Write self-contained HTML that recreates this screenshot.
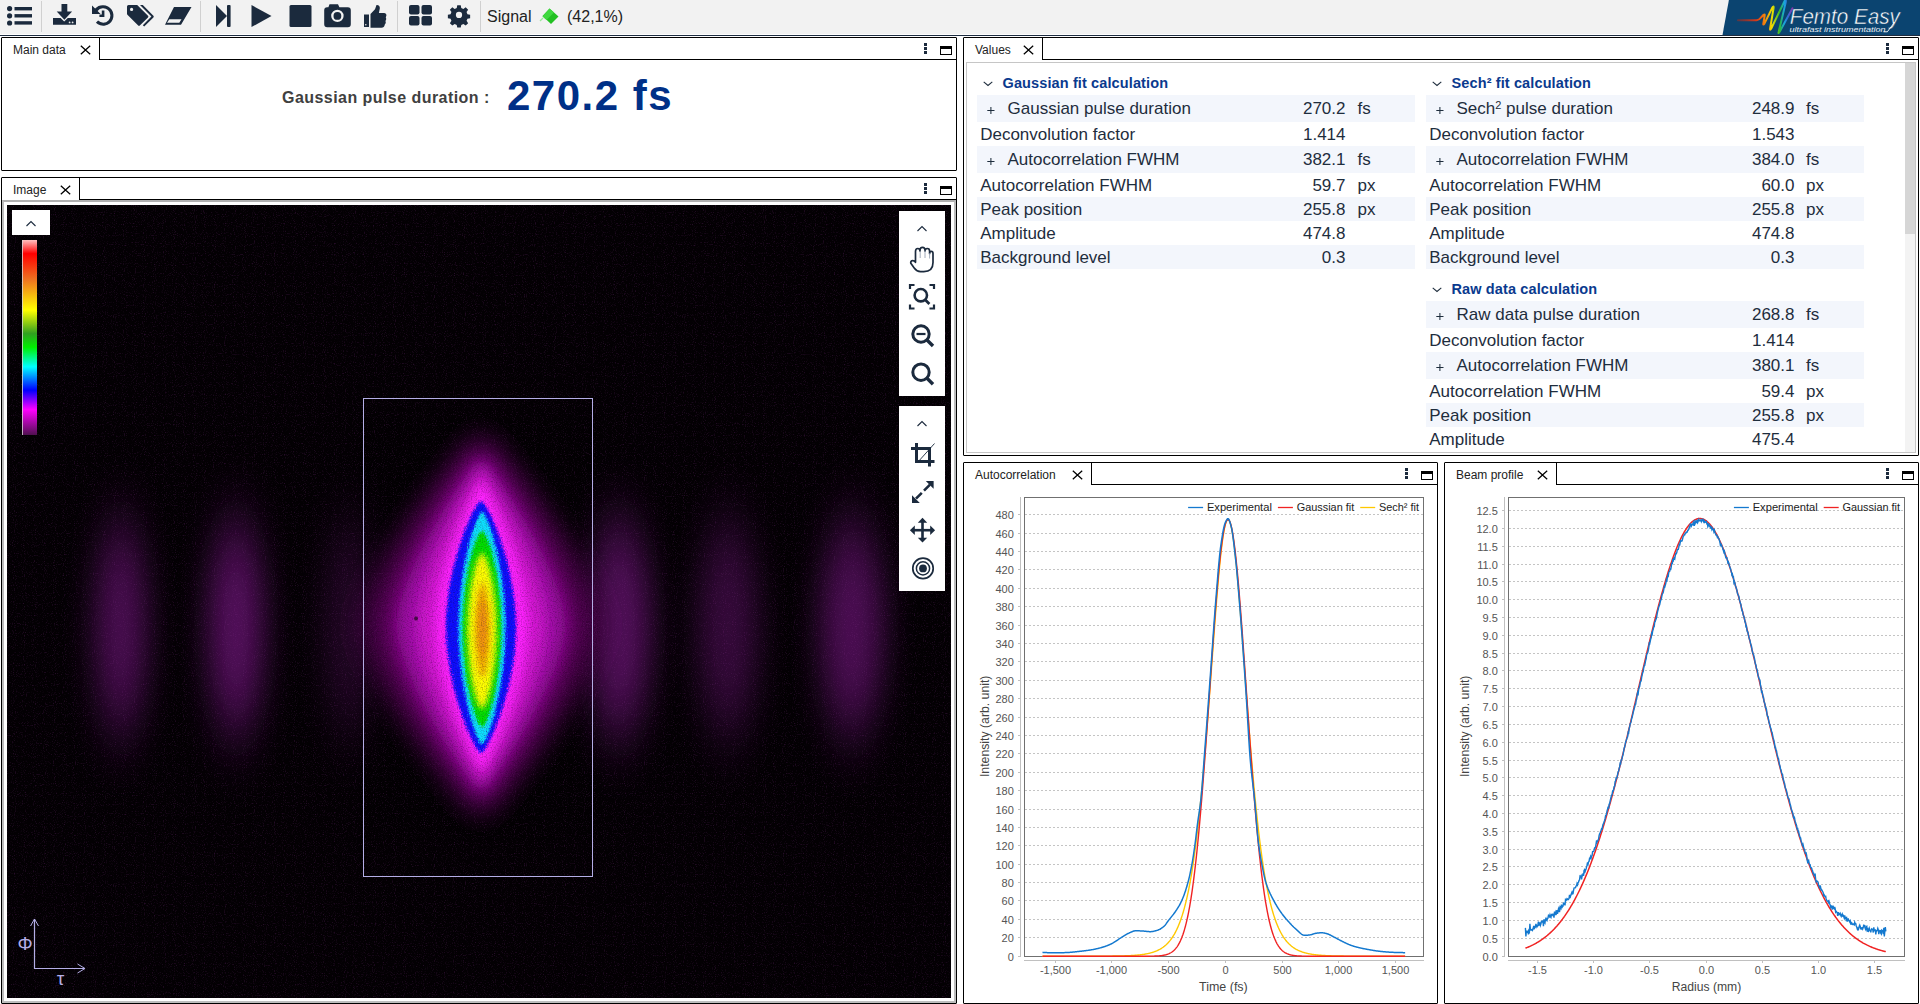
<!DOCTYPE html>
<html><head><meta charset="utf-8"><title>Femto Easy</title>
<style>
html,body{margin:0;padding:0;width:1920px;height:1004px;overflow:hidden;background:#fff;
 font-family:"Liberation Sans",sans-serif;}
.a{position:absolute;}
.pnl{position:absolute;box-sizing:border-box;border:1px solid #000;border-radius:1px;background:#fff;}
.tab{position:absolute;font-size:12px;color:#222;white-space:nowrap;line-height:14px;}
.t{position:absolute;white-space:nowrap;}
svg{position:absolute;overflow:visible;}
</style></head>
<body>
<div class="a" style="left:0;top:0;width:1920px;height:34px;background:#f2f2f2"></div>
<div class="a" style="left:0;top:34px;width:1920px;height:1px;background:#fff"></div>
<div class="a" style="left:0;top:35px;width:1920px;height:1px;background:#1d2c40"></div>
<div class="a" style="left:41px;top:1px;width:1px;height:31px;background:#d0d0d0"></div>
<div class="a" style="left:200px;top:1px;width:1px;height:31px;background:#d0d0d0"></div>
<div class="a" style="left:397px;top:1px;width:1px;height:31px;background:#d0d0d0"></div>
<div class="a" style="left:480px;top:1px;width:1px;height:31px;background:#d0d0d0"></div>

<svg style="left:0;top:0" width="640" height="34" viewBox="0 0 640 34">
 <g fill="#1b2a3d">
  <!-- list -->
  <circle cx="9.6" cy="8.6" r="2.6"/><circle cx="9.6" cy="15.8" r="2.6"/><circle cx="9.6" cy="23" r="2.6"/>
  <rect x="14.5" y="7" width="17.5" height="3.4"/><rect x="14.5" y="14.1" width="17.5" height="3.4"/><rect x="14.5" y="21.2" width="17.5" height="3.4"/>
  <!-- download -->
  <path d="M61.5 4h5.8v7.5h4.8l-7.7 8.3-7.7-8.3h4.8z"/>
  <path d="M53 18h7.6l3.6 3.6 3.6-3.6H76v6.7H53z"/>
  <circle cx="69.6" cy="22.4" r="0.9" fill="#e8e8e8"/><circle cx="72.6" cy="22.4" r="0.9" fill="#e8e8e8"/>
  <!-- history -->
  <path d="M103.2 5.2a10.3 10.3 0 1 1-7.3 17.6l2.2-2.2a7.2 7.2 0 1 0-0.5-9.6l3 3H92V5.5l3.1 3.1a10.3 10.3 0 0 1 8.1-3.4z"/>
  <path d="M101.8 10.5h2.6v6.4h-5v-2.4h2.4z"/>
  <!-- tags -->
  <path d="M128.5 5H137.2L148 15.8Q148.8 16.6 148 17.4L139.8 25.6Q139 26.4 138.2 25.6L127.4 14.8Q127 14.4 127 13.8V6.5Q127 5 128.5 5ZM131.6 7.8a1.6 1.6 0 1 0 0 3.2 1.6 1.6 0 0 0 0-3.2z" fill-rule="evenodd"/>
  <path d="M140 5H142.8L153.4 15.8Q154.2 16.6 153.4 17.4L144.2 26.6L142.8 25.2L151.4 16.6Z"/>
  <!-- eraser -->
  <path d="M174 7h17.5l-10.5 17.8H165zM169.3 19.2l-2.3 3.6h12.3l2.2-3.6z" fill-rule="evenodd"/>
  <!-- step forward -->
  <path d="M216 5v22l11-11z"/><rect x="227" y="5" width="3.6" height="22" rx="1"/>
  <!-- play -->
  <path d="M251.5 5v22l20-11z"/>
  <!-- stop -->
  <rect x="289.5" y="5" width="22" height="22" rx="1.5"/>
  <!-- camera -->
  <path d="M329.5 4.2h8.5l1.4 3h8.4a3 3 0 0 1 3 3v14a3 3 0 0 1-3 3h-20.6a3 3 0 0 1-3-3v-14a3 3 0 0 1 3-3h1.2zM337.4 9.7a6.2 6.2 0 1 0 0 12.4 6.2 6.2 0 0 0 0-12.4zM337.4 12a3.9 3.9 0 1 1 0 7.8 3.9 3.9 0 0 1 0-7.8z" fill-rule="evenodd"/>
  <!-- thumbs up -->
  <path d="M364 14.5h5v12.5h-5z"/><circle cx="365.8" cy="24.8" r="0.8" fill="#e8e8e8"/>
  <path d="M370.5 14l4.5-4.8 1.5-4.3c2.2-.2 3.6 1.2 3.3 3.6l-.9 4.4h5.2c1.4 0 2.5 1.2 2.3 2.6l-.6 2 .5 1.5-.8 2 .3 2-1 1.6c-.3 2.2-1.6 3.2-3.2 3.2H370.5z"/>
  <!-- grid -->
  <rect x="409" y="5" width="10.5" height="9.5" rx="2"/><rect x="421.5" y="5" width="10.5" height="9.5" rx="2"/>
  <rect x="409" y="16" width="10.5" height="9.5" rx="2"/><rect x="421.5" y="16" width="10.5" height="9.5" rx="2"/>
 </g>
 <!-- gear -->
 <g transform="translate(459 14.9) scale(0.87)" fill="#1b2a3d">
  <path id="gear" d="M-2 -11h4l.6 3.1 2.4 1 2.7-1.8 2.8 2.8-1.8 2.7 1 2.4 3.1.6v4l-3.1.6-1 2.4 1.8 2.7-2.8 2.8-2.7-1.8-2.4 1-.6 3.1h-4l-.6-3.1-2.4-1-2.7 1.8-2.8-2.8 1.8-2.7-1-2.4-3.1-.6v-4l3.1-.6 1-2.4-1.8-2.7 2.8-2.8 2.7 1.8 2.4-1zM0 -3.6a3.6 3.6 0 1 0 0 7.2 3.6 3.6 0 0 0 0-7.2z" fill-rule="evenodd"/>
 </g>
 <!-- green flag -->
 <path d="M540 21l3-3" stroke="#9be89b" stroke-width="1.2"/>
 <path d="M549.5 8.5l9 8-7.5 7.5-8.5-8z" fill="#22c022"/>
 <path d="M549.5 8.5l4.5 4-7.5 7.5-4-3.5z" fill="#3ed83e"/>
</svg>
<div class="t" style="left:487px;top:8px;font-size:16px;line-height:18px;color:#222;">Signal</div>
<div class="t" style="left:567px;top:8px;font-size:16px;line-height:18px;color:#222;">(42,1%)</div>

<svg style="left:1720px;top:0" width="200" height="35" viewBox="0 0 200 35">
 <defs>
  <linearGradient id="wave" gradientUnits="userSpaceOnUse" x1="18" y1="0" x2="73" y2="0">
   <stop offset="0" stop-color="#b02818" stop-opacity="0.5"/>
   <stop offset="0.34" stop-color="#d83a18"/>
   <stop offset="0.45" stop-color="#f07010"/>
   <stop offset="0.62" stop-color="#f0e000"/>
   <stop offset="0.76" stop-color="#30b830"/>
   <stop offset="0.84" stop-color="#18a8e0"/>
   <stop offset="0.9" stop-color="#3070d8"/>
   <stop offset="1" stop-color="#9030a8"/>
  </linearGradient>
 </defs>
 <path d="M8.9 0H200V35H2.5z" fill="#0b4470"/>
 <path d="M18 20.3H36.5Q39 20.2 41 17.5L43.6 14.8Q45 13.8 44.6 15.8L43.3 23.6Q43 25.6 44.4 23.6L52.3 7.6Q54 5 53.6 8L50.2 28Q49.6 31.2 51.4 28.2L64.6 1Q66.2 -1.5 65.8 2L58.8 31.5Q58 34.5 59.8 31.5L72.5 8.3" fill="none" stroke="url(#wave)" stroke-width="2" stroke-linejoin="round" stroke-linecap="round"/>
 <text x="69.8" y="24.4" font-family="Liberation Sans" font-style="italic" font-size="21.3" fill="#fff" stroke="#0b4470" stroke-width="0.45" textLength="110" lengthAdjust="spacingAndGlyphs">Femto Easy</text>
 <text x="69.5" y="31.6" font-family="Liberation Sans" font-style="italic" font-size="8" fill="#e8eef4" textLength="96" lengthAdjust="spacingAndGlyphs">ultrafast instrumentation</text>
 <path d="M163.5 31.8h3.8l6.5-8.5" fill="none" stroke="#fff" stroke-width="0.9"/>
</svg>
<div class="pnl" style="left:1px;top:37px;width:956px;height:134px"></div>
<div class="a" style="left:99px;top:59px;width:857px;height:1px;background:#000"></div>
<div class="a" style="left:99px;top:37px;width:1px;height:23px;background:#000"></div>
<div class="tab" style="left:13px;top:43px">Main data</div>
<svg style="left:80px;top:45px" width="11" height="10" viewBox="0 0 11 10"><path d="M0.8 0.8l9.4 8.4M10.2 0.8l-9.4 8.4" stroke="#000" stroke-width="1.25"/></svg>
<div class="a" style="left:924px;top:43px;width:3px;height:3px;background:#1b2a3d"></div>
<div class="a" style="left:924px;top:47px;width:3px;height:3px;background:#1b2a3d"></div>
<div class="a" style="left:924px;top:51px;width:3px;height:3px;background:#1b2a3d"></div>
<div class="a" style="left:940px;top:46px;width:12px;height:9px;box-sizing:border-box;border:1.2px solid #000;border-top-width:3px"></div>
<div class="pnl" style="left:1px;top:177px;width:956px;height:827px"></div>
<div class="a" style="left:79px;top:199px;width:877px;height:1px;background:#000"></div>
<div class="a" style="left:79px;top:177px;width:1px;height:23px;background:#000"></div>
<div class="tab" style="left:13px;top:183px">Image</div>
<svg style="left:60px;top:185px" width="11" height="10" viewBox="0 0 11 10"><path d="M0.8 0.8l9.4 8.4M10.2 0.8l-9.4 8.4" stroke="#000" stroke-width="1.25"/></svg>
<div class="a" style="left:924px;top:183px;width:3px;height:3px;background:#1b2a3d"></div>
<div class="a" style="left:924px;top:187px;width:3px;height:3px;background:#1b2a3d"></div>
<div class="a" style="left:924px;top:191px;width:3px;height:3px;background:#1b2a3d"></div>
<div class="a" style="left:940px;top:186px;width:12px;height:9px;box-sizing:border-box;border:1.2px solid #000;border-top-width:3px"></div>
<div class="pnl" style="left:963px;top:37px;width:956px;height:419px"></div>
<div class="a" style="left:1042px;top:59px;width:876px;height:1px;background:#000"></div>
<div class="a" style="left:1042px;top:37px;width:1px;height:23px;background:#000"></div>
<div class="tab" style="left:975px;top:43px">Values</div>
<svg style="left:1023px;top:45px" width="11" height="10" viewBox="0 0 11 10"><path d="M0.8 0.8l9.4 8.4M10.2 0.8l-9.4 8.4" stroke="#000" stroke-width="1.25"/></svg>
<div class="a" style="left:1886px;top:43px;width:3px;height:3px;background:#1b2a3d"></div>
<div class="a" style="left:1886px;top:47px;width:3px;height:3px;background:#1b2a3d"></div>
<div class="a" style="left:1886px;top:51px;width:3px;height:3px;background:#1b2a3d"></div>
<div class="a" style="left:1902px;top:46px;width:12px;height:9px;box-sizing:border-box;border:1.2px solid #000;border-top-width:3px"></div>
<div class="pnl" style="left:963px;top:462px;width:475px;height:542px"></div>
<div class="a" style="left:1091px;top:484px;width:346px;height:1px;background:#000"></div>
<div class="a" style="left:1091px;top:462px;width:1px;height:23px;background:#000"></div>
<div class="tab" style="left:975px;top:468px">Autocorrelation</div>
<svg style="left:1072px;top:470px" width="11" height="10" viewBox="0 0 11 10"><path d="M0.8 0.8l9.4 8.4M10.2 0.8l-9.4 8.4" stroke="#000" stroke-width="1.25"/></svg>
<div class="a" style="left:1405px;top:468px;width:3px;height:3px;background:#1b2a3d"></div>
<div class="a" style="left:1405px;top:472px;width:3px;height:3px;background:#1b2a3d"></div>
<div class="a" style="left:1405px;top:476px;width:3px;height:3px;background:#1b2a3d"></div>
<div class="a" style="left:1421px;top:471px;width:12px;height:9px;box-sizing:border-box;border:1.2px solid #000;border-top-width:3px"></div>
<div class="pnl" style="left:1444px;top:462px;width:475px;height:542px"></div>
<div class="a" style="left:1556px;top:484px;width:362px;height:1px;background:#000"></div>
<div class="a" style="left:1556px;top:462px;width:1px;height:23px;background:#000"></div>
<div class="tab" style="left:1456px;top:468px">Beam profile</div>
<svg style="left:1537px;top:470px" width="11" height="10" viewBox="0 0 11 10"><path d="M0.8 0.8l9.4 8.4M10.2 0.8l-9.4 8.4" stroke="#000" stroke-width="1.25"/></svg>
<div class="a" style="left:1886px;top:468px;width:3px;height:3px;background:#1b2a3d"></div>
<div class="a" style="left:1886px;top:472px;width:3px;height:3px;background:#1b2a3d"></div>
<div class="a" style="left:1886px;top:476px;width:3px;height:3px;background:#1b2a3d"></div>
<div class="a" style="left:1902px;top:471px;width:12px;height:9px;box-sizing:border-box;border:1.2px solid #000;border-top-width:3px"></div>
<div class="t" style="left:282px;top:89px;font-size:16px;line-height:18px;font-weight:bold;color:#404040;letter-spacing:0.45px">Gaussian pulse duration :</div>
<div class="t" style="left:507px;top:73px;font-size:42px;line-height:46px;font-weight:bold;color:#003087;letter-spacing:1.5px">270.2 fs</div>
<div class="a" style="left:2px;top:200px;width:954px;height:803px;box-sizing:border-box;border:2px solid #bdbdbd;border-top-color:#b0b0b0"></div>
<svg style="left:7px;top:205px" width="944" height="793" viewBox="7 205 944 793">
<defs>
 <filter id="b1" x="-50%" y="-50%" width="200%" height="200%"><feGaussianBlur stdDeviation="1.2"/></filter>
 <filter id="b2" x="-50%" y="-50%" width="200%" height="200%"><feGaussianBlur stdDeviation="2.5"/></filter>
 <filter id="b4" x="-50%" y="-50%" width="200%" height="200%"><feGaussianBlur stdDeviation="4"/></filter>
 <filter id="b7" x="-50%" y="-50%" width="200%" height="200%"><feGaussianBlur stdDeviation="6"/></filter>
 <filter id="b8" x="-50%" y="-50%" width="200%" height="200%"><feGaussianBlur stdDeviation="8"/></filter>
 <filter id="b12" x="-50%" y="-50%" width="200%" height="200%"><feGaussianBlur stdDeviation="14"/></filter>
 <filter id="b20" x="-80%" y="-50%" width="260%" height="200%"><feGaussianBlur stdDeviation="20"/></filter>
 <filter id="b30" x="-80%" y="-80%" width="260%" height="260%"><feGaussianBlur stdDeviation="16 34"/></filter>
 <filter id="speck" x="-20%" y="-20%" width="140%" height="140%">
   <feTurbulence type="fractalNoise" baseFrequency="0.7" numOctaves="2" seed="11" result="t"/>
   <feDisplacementMap in="SourceGraphic" in2="t" scale="6" xChannelSelector="R" yChannelSelector="G"/>
 </filter>
 <filter id="dnoise" x="0" y="0" width="100%" height="100%">
   <feTurbulence type="fractalNoise" baseFrequency="0.8" numOctaves="1" seed="21"/>
   <feColorMatrix type="matrix" values="0 0 0 0 0  0 0 0 0 0  0 0 0 0 0  0 0 0 1.6 -0.75"/>
 </filter>
 <filter id="noise" x="0" y="0" width="100%" height="100%">
   <feTurbulence type="fractalNoise" baseFrequency="0.9" numOctaves="1" seed="4" result="n"/>
   <feColorMatrix type="matrix" values="0 0 0 0 0.22  0 0 0 0 0.03  0 0 0 0 0.25  0 0 0 1.0 -0.55"/>
 </filter>
 <linearGradient id="cbar" x1="0" y1="0" x2="0" y2="1">
  <stop offset="0" stop-color="#ffc0c0"/>
  <stop offset="0.07" stop-color="#ff0000"/>
  <stop offset="0.2" stop-color="#ee7020"/>
  <stop offset="0.36" stop-color="#ffff00"/>
  <stop offset="0.48" stop-color="#30a020"/>
  <stop offset="0.55" stop-color="#00ee00"/>
  <stop offset="0.65" stop-color="#00ffff"/>
  <stop offset="0.77" stop-color="#0000ff"/>
  <stop offset="0.87" stop-color="#ff00ff"/>
  <stop offset="1" stop-color="#501050"/>
 </linearGradient>
</defs>
<rect x="7" y="205" width="944" height="793" fill="#030003"/>
<ellipse cx="121" cy="628" rx="26" ry="108" fill="#a01cb0" opacity="0.46" filter="url(#b30)"/>
<ellipse cx="236" cy="628" rx="28" ry="108" fill="#a01cb0" opacity="0.52" filter="url(#b30)"/>
<ellipse cx="350" cy="628" rx="26" ry="108" fill="#a01cb0" opacity="0.2" filter="url(#b30)"/>
<ellipse cx="619" cy="628" rx="32" ry="108" fill="#a01cb0" opacity="0.5" filter="url(#b30)"/>
<ellipse cx="728" cy="628" rx="30" ry="108" fill="#a01cb0" opacity="0.32" filter="url(#b30)"/>
<ellipse cx="852" cy="628" rx="32" ry="108" fill="#a01cb0" opacity="0.46" filter="url(#b30)"/>
<path d="M481 433C487.0 433 601 567.4 601 625C601 682.6 487.0 817 481 817C475.0 817 361 682.6 361 625C361 567.4 475.0 433 481 433Z" fill="#380038" filter="url(#b12)"/>
<path d="M481 443C486.0 443 581 570.4 581 625C581 679.6 486.0 807 481 807C476.0 807 381 679.6 381 625C381 570.4 476.0 443 481 443Z" fill="#680068" filter="url(#b12)"/>
<path d="M481 457C485.2 457 565 571.24 565 625C565 678.76 485.2 793 481 793C476.8 793 397 678.76 397 625C397 571.24 476.8 457 481 457Z" fill="#a010a8" filter="url(#b8)"/>
<path d="M481.5 469C485.34 469 545.5 570.4 545.5 625C545.5 679.6 485.34 781 481.5 781C477.66 781 417.5 679.6 417.5 625C417.5 570.4 477.66 469 481.5 469Z" fill="#d018d0" filter="url(#b7)"/>
<path d="M481.5 483C486.2 483 528.5 565.94 528.5 626C528.5 686.06 486.2 769 481.5 769C476.8 769 434.5 686.06 434.5 626C434.5 565.94 476.8 483 481.5 483Z" fill="#ff22ff" filter="url(#b4)"/>
<g filter="url(#speck)">
<path d="M481 501C486.6 501 516 564.0 516 627C516 690.0 486.6 753 481 753C475.4 753 446 690.0 446 627C446 564.0 475.4 501 481 501Z" fill="#0808ff" filter="url(#b1)"/>
<path d="M482 512C486.7 512 505.5 564.2 505.5 628C505.5 691.8 486.7 744 482 744C477.3 744 458.5 691.8 458.5 628C458.5 564.2 477.3 512 482 512Z" fill="#10e0ff" filter="url(#b1)"/>
<path d="M482 531C486.68 531 501.5 572.16 501.5 629C501.5 685.84 486.68 727 482 727C477.32 727 462.5 685.84 462.5 629C462.5 572.16 477.32 531 482 531Z" fill="#00e000" filter="url(#b1)"/>
<path d="M482 553C486.06 553 496.5 584.2 496.5 631C496.5 677.8 486.06 709 482 709C477.94 709 467.5 677.8 467.5 631C467.5 584.2 477.94 553 482 553Z" fill="#ffff00" filter="url(#b2)"/>
<path d="M482.5 582C484.74 582 489.5 601.2 489.5 630C489.5 658.8 484.74 678 482.5 678C480.26 678 475.5 658.8 475.5 630C475.5 601.2 480.26 582 482.5 582Z" fill="#f0a000" opacity="0.9" filter="url(#b2)"/>
<path d="M482.5 598C483.94 598 487.0 610.0 487.0 628C487.0 646.0 483.94 658 482.5 658C481.06 658 478.0 646.0 478.0 628C478.0 610.0 481.06 598 482.5 598Z" fill="#f08010" opacity="0.6" filter="url(#b2)"/>
</g>
<rect x="360" y="420" width="240" height="420" filter="url(#dnoise)" opacity="0.5"/>
<circle cx="416" cy="618.5" r="2" fill="#2a0a2a" opacity="0.8"/>
<rect x="7" y="205" width="944" height="793" filter="url(#noise)"/>
<rect x="363.5" y="398.5" width="229" height="478" fill="none" stroke="#b4aee6" stroke-width="1"/>
<rect x="12" y="210" width="38" height="25" fill="#fff"/>
<path d="M26.5 226l4.5-4.5 4.5 4.5" fill="none" stroke="#1b2a3d" stroke-width="1.1"/>
<rect x="22" y="240" width="15" height="195" fill="url(#cbar)"/>
<rect x="22" y="240" width="1" height="195" fill="#d8d8d8" opacity="0.8"/>
<path d="M34.5 919V968.5H85" fill="none" stroke="#b4aee6" stroke-width="1.2"/>
<path d="M30.5 926l4-7 4 7M77.5 964l7.5 4.5-7.5 4.5" fill="none" stroke="#b4aee6" stroke-width="1"/>
<text x="25" y="950" font-family="Liberation Sans" font-size="19" fill="#b4aee6" text-anchor="middle">&#934;</text>
<text x="60.5" y="985" font-family="Liberation Sans" font-size="19" fill="#b4aee6" text-anchor="middle">&#964;</text>
<rect x="899" y="211" width="46" height="185" fill="#fff"/>
<rect x="899" y="406" width="46" height="185" fill="#fff"/>
<g fill="none" stroke="#1b2a3d" stroke-width="1.1">
  <path d="M917.5 231l4.5-4.5 4.5 4.5"/>
  <path d="M917.5 426l4.5-4.5 4.5 4.5"/>
 </g>
 <!-- hand -->
 <path d="M915.5 261V251.5Q915.5 248.5 917.8 248.5Q920 248.5 920 251V250Q920 247.3 922.5 247.3Q925 247.3 925 250V251Q925 248.5 927.3 248.5Q929.6 248.5 929.6 251V253.5Q929.6 251.3 931.3 251.3Q933 251.3 933 253.5V262.5Q933 271.6 923.8 271.6H920.5Q916.8 271.6 914.2 268L911 263.6Q910.2 261.8 911.8 260.8Q913.6 259.9 915.5 262.3Z" fill="#fff" stroke="#1b2a3d" stroke-width="1.7" stroke-linejoin="round"/>
 <path d="M920.2 251.5V258M925 250.5V258M929.6 253V258.5" stroke="#8a96a8" stroke-width="0.8"/>
 <!-- zoom fit -->
 <g fill="none" stroke="#1b2a3d" stroke-width="2.2">
  <path d="M910 289v-4h4.5M929.5 285h4.5v4M934 304.5v4h-4.5M914.5 308.5H910v-4"/>
  <circle cx="920.8" cy="295.2" r="6.2" stroke-width="2.6"/>
  <path d="M925.2 299.8l4.2 4.2" stroke-width="2.8"/>
 </g>
 <!-- zoom out -->
 <g fill="none" stroke="#1b2a3d">
  <circle cx="921" cy="334" r="8.2" stroke-width="3"/>
  <path d="M927 340l6 6" stroke-width="3.4"/>
  <path d="M916.5 334h9" stroke-width="2.2"/>
 </g>
 <!-- zoom -->
 <g fill="none" stroke="#1b2a3d">
  <circle cx="921" cy="372.2" r="8.2" stroke-width="3"/>
  <path d="M927 378.2l6 6" stroke-width="3.4"/>
 </g>
 <!-- crop -->
 <g fill="#1b2a3d">
  <rect x="911" y="447" width="20" height="3"/>
  <rect x="915" y="443" width="3" height="20"/>
  <rect x="928" y="447" width="3" height="19.5"/>
  <rect x="915" y="460" width="19.5" height="3"/>
 </g>
 <path d="M917.5 462.5L934.5 443.5" stroke="#1b2a3d" stroke-width="0.9"/>
 <!-- resize diag -->
 <g fill="#1b2a3d">
  <path d="M925.8 481H933.6V488.8Z"/>
  <path d="M912 495.2V503H919.8Z"/>
 </g>
 <path d="M930 484.6L924 490.6M916 498.6L921.8 492.8" stroke="#1b2a3d" stroke-width="2.6"/>
 <!-- move -->
 <g fill="#1b2a3d">
  <path d="M922.5 517.8l4.7 4.9h-9.4z"/>
  <path d="M922.5 542.6l4.7-4.9h-9.4z"/>
  <path d="M909.9 530.2l4.9-4.7v9.4z"/>
  <path d="M935.1 530.2l-4.9-4.7v9.4z"/>
  <rect x="921.2" y="522" width="2.6" height="16"/>
  <rect x="914" y="528.9" width="17" height="2.6"/>
 </g>
 <!-- target -->
 <g fill="none" stroke="#1b2a3d">
  <circle cx="923" cy="568.4" r="10.2" stroke-width="1.7"/>
  <circle cx="923" cy="568.4" r="6.6" stroke-width="1.5"/>
 </g>
 <circle cx="923" cy="568.4" r="3.9" fill="#1b2a3d"/>
</svg>
<div class="a" style="left:966px;top:62px;width:950px;height:391px;box-sizing:border-box;border:1px solid #c6c6c6"></div>
<div class="a" style="left:1905px;top:63px;width:10px;height:389px;background:#f3f3f3"></div>
<div class="a" style="left:1905px;top:63px;width:10px;height:171px;background:#d6d6d6"></div>
<svg style="left:983px;top:81px" width="10" height="6" viewBox="0 0 10 6"><path d="M0.7 0.9l4.3 3.6 4.3-3.6" fill="none" stroke="#1e2d3d" stroke-width="1.1"/></svg>
<div class="t" style="left:1002.5px;top:75.73px;font-size:14.5px;line-height:14.5px;color:#0a3a8e;font-weight:bold;letter-spacing:0.12px;">Gaussian fit calculation</div>
<div class="a" style="left:977px;top:95px;width:438px;height:27px;background:#f3f6fc"></div>
<svg style="left:986.5px;top:106px" width="8" height="8" viewBox="0 0 8 8"><path d="M0.3 4.5h7.2M3.9 0.9v7.2" stroke="#1e2d3d" stroke-width="1.05"/></svg>
<div class="t" style="left:1007.5px;top:99.61px;font-size:17px;line-height:17px;color:#1e2d3d;">Gaussian pulse duration</div>
<div class="t" style="right:574.5px;top:99.61px;font-size:17px;line-height:17px;color:#1e2d3d;text-align:right">270.2</div>
<div class="t" style="left:1357.5px;top:99.61px;font-size:17px;line-height:17px;color:#1e2d3d;">fs</div>
<div class="t" style="left:980.2px;top:125.61px;font-size:17px;line-height:17px;color:#1e2d3d;">Deconvolution factor</div>
<div class="t" style="right:574.5px;top:125.61px;font-size:17px;line-height:17px;color:#1e2d3d;text-align:right">1.414</div>
<div class="a" style="left:977px;top:146px;width:438px;height:27px;background:#f3f6fc"></div>
<svg style="left:986.5px;top:157px" width="8" height="8" viewBox="0 0 8 8"><path d="M0.3 4.5h7.2M3.9 0.9v7.2" stroke="#1e2d3d" stroke-width="1.05"/></svg>
<div class="t" style="left:1007.5px;top:150.61px;font-size:17px;line-height:17px;color:#1e2d3d;">Autocorrelation FWHM</div>
<div class="t" style="right:574.5px;top:150.61px;font-size:17px;line-height:17px;color:#1e2d3d;text-align:right">382.1</div>
<div class="t" style="left:1357.5px;top:150.61px;font-size:17px;line-height:17px;color:#1e2d3d;">fs</div>
<div class="t" style="left:980.2px;top:176.61px;font-size:17px;line-height:17px;color:#1e2d3d;">Autocorrelation FWHM</div>
<div class="t" style="right:574.5px;top:176.61px;font-size:17px;line-height:17px;color:#1e2d3d;text-align:right">59.7</div>
<div class="t" style="left:1357.5px;top:176.61px;font-size:17px;line-height:17px;color:#1e2d3d;">px</div>
<div class="a" style="left:977px;top:197px;width:438px;height:24px;background:#f3f6fc"></div>
<div class="t" style="left:980.2px;top:200.61px;font-size:17px;line-height:17px;color:#1e2d3d;">Peak position</div>
<div class="t" style="right:574.5px;top:200.61px;font-size:17px;line-height:17px;color:#1e2d3d;text-align:right">255.8</div>
<div class="t" style="left:1357.5px;top:200.61px;font-size:17px;line-height:17px;color:#1e2d3d;">px</div>
<div class="t" style="left:980.2px;top:224.61px;font-size:17px;line-height:17px;color:#1e2d3d;">Amplitude</div>
<div class="t" style="right:574.5px;top:224.61px;font-size:17px;line-height:17px;color:#1e2d3d;text-align:right">474.8</div>
<div class="a" style="left:977px;top:245px;width:438px;height:24px;background:#f3f6fc"></div>
<div class="t" style="left:980.2px;top:248.61px;font-size:17px;line-height:17px;color:#1e2d3d;">Background level</div>
<div class="t" style="right:574.5px;top:248.61px;font-size:17px;line-height:17px;color:#1e2d3d;text-align:right">0.3</div>
<svg style="left:1432px;top:81px" width="10" height="6" viewBox="0 0 10 6"><path d="M0.7 0.9l4.3 3.6 4.3-3.6" fill="none" stroke="#1e2d3d" stroke-width="1.1"/></svg>
<div class="t" style="left:1451.5px;top:75.73px;font-size:14.5px;line-height:14.5px;color:#0a3a8e;font-weight:bold;letter-spacing:0.12px;">Sech&sup2; fit calculation</div>
<div class="a" style="left:1426px;top:95px;width:438px;height:27px;background:#f3f6fc"></div>
<svg style="left:1435.5px;top:106px" width="8" height="8" viewBox="0 0 8 8"><path d="M0.3 4.5h7.2M3.9 0.9v7.2" stroke="#1e2d3d" stroke-width="1.05"/></svg>
<div class="t" style="left:1456.5px;top:99.61px;font-size:17px;line-height:17px;color:#1e2d3d;">Sech<span style="font-size:11px;position:relative;top:-5px">2</span> pulse duration</div>
<div class="t" style="right:125.5px;top:99.61px;font-size:17px;line-height:17px;color:#1e2d3d;text-align:right">248.9</div>
<div class="t" style="left:1806px;top:99.61px;font-size:17px;line-height:17px;color:#1e2d3d;">fs</div>
<div class="t" style="left:1429.2px;top:125.61px;font-size:17px;line-height:17px;color:#1e2d3d;">Deconvolution factor</div>
<div class="t" style="right:125.5px;top:125.61px;font-size:17px;line-height:17px;color:#1e2d3d;text-align:right">1.543</div>
<div class="a" style="left:1426px;top:146px;width:438px;height:27px;background:#f3f6fc"></div>
<svg style="left:1435.5px;top:157px" width="8" height="8" viewBox="0 0 8 8"><path d="M0.3 4.5h7.2M3.9 0.9v7.2" stroke="#1e2d3d" stroke-width="1.05"/></svg>
<div class="t" style="left:1456.5px;top:150.61px;font-size:17px;line-height:17px;color:#1e2d3d;">Autocorrelation FWHM</div>
<div class="t" style="right:125.5px;top:150.61px;font-size:17px;line-height:17px;color:#1e2d3d;text-align:right">384.0</div>
<div class="t" style="left:1806px;top:150.61px;font-size:17px;line-height:17px;color:#1e2d3d;">fs</div>
<div class="t" style="left:1429.2px;top:176.61px;font-size:17px;line-height:17px;color:#1e2d3d;">Autocorrelation FWHM</div>
<div class="t" style="right:125.5px;top:176.61px;font-size:17px;line-height:17px;color:#1e2d3d;text-align:right">60.0</div>
<div class="t" style="left:1806px;top:176.61px;font-size:17px;line-height:17px;color:#1e2d3d;">px</div>
<div class="a" style="left:1426px;top:197px;width:438px;height:24px;background:#f3f6fc"></div>
<div class="t" style="left:1429.2px;top:200.61px;font-size:17px;line-height:17px;color:#1e2d3d;">Peak position</div>
<div class="t" style="right:125.5px;top:200.61px;font-size:17px;line-height:17px;color:#1e2d3d;text-align:right">255.8</div>
<div class="t" style="left:1806px;top:200.61px;font-size:17px;line-height:17px;color:#1e2d3d;">px</div>
<div class="t" style="left:1429.2px;top:224.61px;font-size:17px;line-height:17px;color:#1e2d3d;">Amplitude</div>
<div class="t" style="right:125.5px;top:224.61px;font-size:17px;line-height:17px;color:#1e2d3d;text-align:right">474.8</div>
<div class="a" style="left:1426px;top:245px;width:438px;height:24px;background:#f3f6fc"></div>
<div class="t" style="left:1429.2px;top:248.61px;font-size:17px;line-height:17px;color:#1e2d3d;">Background level</div>
<div class="t" style="right:125.5px;top:248.61px;font-size:17px;line-height:17px;color:#1e2d3d;text-align:right">0.3</div>
<svg style="left:1432px;top:287px" width="10" height="6" viewBox="0 0 10 6"><path d="M0.7 0.9l4.3 3.6 4.3-3.6" fill="none" stroke="#1e2d3d" stroke-width="1.1"/></svg>
<div class="t" style="left:1451.5px;top:281.73px;font-size:14.5px;line-height:14.5px;color:#0a3a8e;font-weight:bold;letter-spacing:0.12px;">Raw data calculation</div>
<div class="a" style="left:1426px;top:301px;width:438px;height:27px;background:#f3f6fc"></div>
<svg style="left:1435.5px;top:312px" width="8" height="8" viewBox="0 0 8 8"><path d="M0.3 4.5h7.2M3.9 0.9v7.2" stroke="#1e2d3d" stroke-width="1.05"/></svg>
<div class="t" style="left:1456.5px;top:305.61px;font-size:17px;line-height:17px;color:#1e2d3d;">Raw data pulse duration</div>
<div class="t" style="right:125.5px;top:305.61px;font-size:17px;line-height:17px;color:#1e2d3d;text-align:right">268.8</div>
<div class="t" style="left:1806px;top:305.61px;font-size:17px;line-height:17px;color:#1e2d3d;">fs</div>
<div class="t" style="left:1429.2px;top:331.61px;font-size:17px;line-height:17px;color:#1e2d3d;">Deconvolution factor</div>
<div class="t" style="right:125.5px;top:331.61px;font-size:17px;line-height:17px;color:#1e2d3d;text-align:right">1.414</div>
<div class="a" style="left:1426px;top:352px;width:438px;height:27px;background:#f3f6fc"></div>
<svg style="left:1435.5px;top:363px" width="8" height="8" viewBox="0 0 8 8"><path d="M0.3 4.5h7.2M3.9 0.9v7.2" stroke="#1e2d3d" stroke-width="1.05"/></svg>
<div class="t" style="left:1456.5px;top:356.61px;font-size:17px;line-height:17px;color:#1e2d3d;">Autocorrelation FWHM</div>
<div class="t" style="right:125.5px;top:356.61px;font-size:17px;line-height:17px;color:#1e2d3d;text-align:right">380.1</div>
<div class="t" style="left:1806px;top:356.61px;font-size:17px;line-height:17px;color:#1e2d3d;">fs</div>
<div class="t" style="left:1429.2px;top:382.61px;font-size:17px;line-height:17px;color:#1e2d3d;">Autocorrelation FWHM</div>
<div class="t" style="right:125.5px;top:382.61px;font-size:17px;line-height:17px;color:#1e2d3d;text-align:right">59.4</div>
<div class="t" style="left:1806px;top:382.61px;font-size:17px;line-height:17px;color:#1e2d3d;">px</div>
<div class="a" style="left:1426px;top:403px;width:438px;height:24px;background:#f3f6fc"></div>
<div class="t" style="left:1429.2px;top:406.61px;font-size:17px;line-height:17px;color:#1e2d3d;">Peak position</div>
<div class="t" style="right:125.5px;top:406.61px;font-size:17px;line-height:17px;color:#1e2d3d;text-align:right">255.8</div>
<div class="t" style="left:1806px;top:406.61px;font-size:17px;line-height:17px;color:#1e2d3d;">px</div>
<div class="t" style="left:1429.2px;top:430.61px;font-size:17px;line-height:17px;color:#1e2d3d;">Amplitude</div>
<div class="t" style="right:125.5px;top:430.61px;font-size:17px;line-height:17px;color:#1e2d3d;text-align:right">475.4</div>
<svg style="left:0;top:0" width="1920" height="1004" viewBox="0 0 1920 1004" font-family="Liberation Sans">
<path d="M1025 937.5H1423" stroke="#c4c4c4" stroke-width="1" stroke-dasharray="2 2"/>
<path d="M1025 919.5H1423" stroke="#c4c4c4" stroke-width="1" stroke-dasharray="2 2"/>
<path d="M1025 900.5H1423" stroke="#c4c4c4" stroke-width="1" stroke-dasharray="2 2"/>
<path d="M1025 882.5H1423" stroke="#c4c4c4" stroke-width="1" stroke-dasharray="2 2"/>
<path d="M1025 864.5H1423" stroke="#c4c4c4" stroke-width="1" stroke-dasharray="2 2"/>
<path d="M1025 845.5H1423" stroke="#c4c4c4" stroke-width="1" stroke-dasharray="2 2"/>
<path d="M1025 827.5H1423" stroke="#c4c4c4" stroke-width="1" stroke-dasharray="2 2"/>
<path d="M1025 809.5H1423" stroke="#c4c4c4" stroke-width="1" stroke-dasharray="2 2"/>
<path d="M1025 790.5H1423" stroke="#c4c4c4" stroke-width="1" stroke-dasharray="2 2"/>
<path d="M1025 772.5H1423" stroke="#c4c4c4" stroke-width="1" stroke-dasharray="2 2"/>
<path d="M1025 753.5H1423" stroke="#c4c4c4" stroke-width="1" stroke-dasharray="2 2"/>
<path d="M1025 735.5H1423" stroke="#c4c4c4" stroke-width="1" stroke-dasharray="2 2"/>
<path d="M1025 717.5H1423" stroke="#c4c4c4" stroke-width="1" stroke-dasharray="2 2"/>
<path d="M1025 698.5H1423" stroke="#c4c4c4" stroke-width="1" stroke-dasharray="2 2"/>
<path d="M1025 680.5H1423" stroke="#c4c4c4" stroke-width="1" stroke-dasharray="2 2"/>
<path d="M1025 661.5H1423" stroke="#c4c4c4" stroke-width="1" stroke-dasharray="2 2"/>
<path d="M1025 643.5H1423" stroke="#c4c4c4" stroke-width="1" stroke-dasharray="2 2"/>
<path d="M1025 625.5H1423" stroke="#c4c4c4" stroke-width="1" stroke-dasharray="2 2"/>
<path d="M1025 606.5H1423" stroke="#c4c4c4" stroke-width="1" stroke-dasharray="2 2"/>
<path d="M1025 588.5H1423" stroke="#c4c4c4" stroke-width="1" stroke-dasharray="2 2"/>
<path d="M1025 569.5H1423" stroke="#c4c4c4" stroke-width="1" stroke-dasharray="2 2"/>
<path d="M1025 551.5H1423" stroke="#c4c4c4" stroke-width="1" stroke-dasharray="2 2"/>
<path d="M1025 533.5H1423" stroke="#c4c4c4" stroke-width="1" stroke-dasharray="2 2"/>
<path d="M1025 514.5H1423" stroke="#c4c4c4" stroke-width="1" stroke-dasharray="2 2"/>
<rect x="1024.5" y="497.5" width="399" height="459" fill="none" stroke="#707070" stroke-width="1"/>
<path d="M1020.5 497V957" stroke="#c0c0c0" stroke-width="1"/>
<path d="M1018 956.5H1021" stroke="#c0c0c0" stroke-width="1"/>
<text x="1013.80" y="960.50" font-size="11" fill="#555555" text-anchor="end" >0</text>
<path d="M1018 937.5H1021" stroke="#c0c0c0" stroke-width="1"/>
<text x="1013.80" y="941.50" font-size="11" fill="#555555" text-anchor="end" >20</text>
<path d="M1018 919.5H1021" stroke="#c0c0c0" stroke-width="1"/>
<text x="1013.80" y="923.50" font-size="11" fill="#555555" text-anchor="end" >40</text>
<path d="M1018 900.5H1021" stroke="#c0c0c0" stroke-width="1"/>
<text x="1013.80" y="904.50" font-size="11" fill="#555555" text-anchor="end" >60</text>
<path d="M1018 882.5H1021" stroke="#c0c0c0" stroke-width="1"/>
<text x="1013.80" y="886.50" font-size="11" fill="#555555" text-anchor="end" >80</text>
<path d="M1018 864.5H1021" stroke="#c0c0c0" stroke-width="1"/>
<text x="1013.80" y="868.50" font-size="11" fill="#555555" text-anchor="end" >100</text>
<path d="M1018 845.5H1021" stroke="#c0c0c0" stroke-width="1"/>
<text x="1013.80" y="849.50" font-size="11" fill="#555555" text-anchor="end" >120</text>
<path d="M1018 827.5H1021" stroke="#c0c0c0" stroke-width="1"/>
<text x="1013.80" y="831.50" font-size="11" fill="#555555" text-anchor="end" >140</text>
<path d="M1018 809.5H1021" stroke="#c0c0c0" stroke-width="1"/>
<text x="1013.80" y="813.50" font-size="11" fill="#555555" text-anchor="end" >160</text>
<path d="M1018 790.5H1021" stroke="#c0c0c0" stroke-width="1"/>
<text x="1013.80" y="794.50" font-size="11" fill="#555555" text-anchor="end" >180</text>
<path d="M1018 772.5H1021" stroke="#c0c0c0" stroke-width="1"/>
<text x="1013.80" y="776.50" font-size="11" fill="#555555" text-anchor="end" >200</text>
<path d="M1018 753.5H1021" stroke="#c0c0c0" stroke-width="1"/>
<text x="1013.80" y="757.50" font-size="11" fill="#555555" text-anchor="end" >220</text>
<path d="M1018 735.5H1021" stroke="#c0c0c0" stroke-width="1"/>
<text x="1013.80" y="739.50" font-size="11" fill="#555555" text-anchor="end" >240</text>
<path d="M1018 717.5H1021" stroke="#c0c0c0" stroke-width="1"/>
<text x="1013.80" y="721.50" font-size="11" fill="#555555" text-anchor="end" >260</text>
<path d="M1018 698.5H1021" stroke="#c0c0c0" stroke-width="1"/>
<text x="1013.80" y="702.50" font-size="11" fill="#555555" text-anchor="end" >280</text>
<path d="M1018 680.5H1021" stroke="#c0c0c0" stroke-width="1"/>
<text x="1013.80" y="684.50" font-size="11" fill="#555555" text-anchor="end" >300</text>
<path d="M1018 661.5H1021" stroke="#c0c0c0" stroke-width="1"/>
<text x="1013.80" y="665.50" font-size="11" fill="#555555" text-anchor="end" >320</text>
<path d="M1018 643.5H1021" stroke="#c0c0c0" stroke-width="1"/>
<text x="1013.80" y="647.50" font-size="11" fill="#555555" text-anchor="end" >340</text>
<path d="M1018 625.5H1021" stroke="#c0c0c0" stroke-width="1"/>
<text x="1013.80" y="629.50" font-size="11" fill="#555555" text-anchor="end" >360</text>
<path d="M1018 606.5H1021" stroke="#c0c0c0" stroke-width="1"/>
<text x="1013.80" y="610.50" font-size="11" fill="#555555" text-anchor="end" >380</text>
<path d="M1018 588.5H1021" stroke="#c0c0c0" stroke-width="1"/>
<text x="1013.80" y="592.50" font-size="11" fill="#555555" text-anchor="end" >400</text>
<path d="M1018 569.5H1021" stroke="#c0c0c0" stroke-width="1"/>
<text x="1013.80" y="573.50" font-size="11" fill="#555555" text-anchor="end" >420</text>
<path d="M1018 551.5H1021" stroke="#c0c0c0" stroke-width="1"/>
<text x="1013.80" y="555.50" font-size="11" fill="#555555" text-anchor="end" >440</text>
<path d="M1018 533.5H1021" stroke="#c0c0c0" stroke-width="1"/>
<text x="1013.80" y="537.50" font-size="11" fill="#555555" text-anchor="end" >460</text>
<path d="M1018 514.5H1021" stroke="#c0c0c0" stroke-width="1"/>
<text x="1013.80" y="518.50" font-size="11" fill="#555555" text-anchor="end" >480</text>
<path d="M1024 960.5H1424" stroke="#c0c0c0" stroke-width="1"/>
<path d="M1055.5 960V963" stroke="#c0c0c0" stroke-width="1"/>
<text x="1055.50" y="974.00" font-size="11" fill="#555555" text-anchor="middle" >-1,500</text>
<path d="M1111.5 960V963" stroke="#c0c0c0" stroke-width="1"/>
<text x="1111.50" y="974.00" font-size="11" fill="#555555" text-anchor="middle" >-1,000</text>
<path d="M1168.5 960V963" stroke="#c0c0c0" stroke-width="1"/>
<text x="1168.50" y="974.00" font-size="11" fill="#555555" text-anchor="middle" >-500</text>
<path d="M1225.5 960V963" stroke="#c0c0c0" stroke-width="1"/>
<text x="1225.50" y="974.00" font-size="11" fill="#555555" text-anchor="middle" >0</text>
<path d="M1282.5 960V963" stroke="#c0c0c0" stroke-width="1"/>
<text x="1282.50" y="974.00" font-size="11" fill="#555555" text-anchor="middle" >500</text>
<path d="M1338.5 960V963" stroke="#c0c0c0" stroke-width="1"/>
<text x="1338.50" y="974.00" font-size="11" fill="#555555" text-anchor="middle" >1,000</text>
<path d="M1395.5 960V963" stroke="#c0c0c0" stroke-width="1"/>
<text x="1395.50" y="974.00" font-size="11" fill="#555555" text-anchor="middle" >1,500</text>
<text x="1223.40" y="991.00" font-size="12.5" fill="#444" text-anchor="middle" textLength="48.7" lengthAdjust="spacingAndGlyphs">Time (fs)</text>
<text x="0" y="0" font-size="12.5" fill="#444" text-anchor="middle" textLength="101.5" lengthAdjust="spacingAndGlyphs" transform="translate(988.6 726.3) rotate(-90)">Intensity (arb. unit)</text>
<path d="M1042.49 956.22L1042.89 956.22L1043.29 956.22L1043.70 956.22L1044.10 956.22L1044.50 956.22L1044.91 956.22L1045.31 956.22L1045.71 956.22L1046.12 956.22L1046.52 956.22L1046.92 956.22L1047.33 956.22L1047.73 956.22L1048.13 956.22L1048.54 956.22L1048.94 956.22L1049.34 956.22L1049.75 956.22L1050.15 956.22L1050.55 956.22L1050.96 956.22L1051.36 956.22L1051.76 956.22L1052.17 956.22L1052.57 956.22L1052.97 956.22L1053.38 956.22L1053.78 956.22L1054.18 956.22L1054.59 956.22L1054.99 956.22L1055.39 956.22L1055.80 956.22L1056.20 956.22L1056.60 956.22L1057.01 956.22L1057.41 956.22L1057.81 956.22L1058.22 956.22L1058.62 956.22L1059.03 956.22L1059.43 956.22L1059.83 956.22L1060.24 956.22L1060.64 956.22L1061.04 956.22L1061.45 956.22L1061.85 956.22L1062.25 956.22L1062.66 956.22L1063.06 956.22L1063.46 956.22L1063.87 956.22L1064.27 956.22L1064.67 956.22L1065.08 956.22L1065.48 956.22L1065.88 956.22L1066.29 956.22L1066.69 956.22L1067.09 956.22L1067.50 956.22L1067.90 956.22L1068.30 956.22L1068.71 956.22L1069.11 956.22L1069.51 956.22L1069.92 956.22L1070.32 956.22L1070.72 956.22L1071.13 956.22L1071.53 956.22L1071.93 956.22L1072.34 956.22L1072.74 956.22L1073.14 956.22L1073.55 956.22L1073.95 956.22L1074.35 956.22L1074.76 956.22L1075.16 956.22L1075.56 956.22L1075.97 956.22L1076.37 956.22L1076.77 956.22L1077.18 956.22L1077.58 956.22L1077.98 956.21L1078.39 956.21L1078.79 956.21L1079.19 956.21L1079.60 956.21L1080.00 956.21L1080.41 956.21L1080.81 956.21L1081.21 956.21L1081.62 956.21L1082.02 956.21L1082.42 956.21L1082.83 956.21L1083.23 956.21L1083.63 956.21L1084.04 956.21L1084.44 956.21L1084.84 956.21L1085.25 956.21L1085.65 956.21L1086.05 956.21L1086.46 956.21L1086.86 956.21L1087.26 956.20L1087.67 956.20L1088.07 956.20L1088.47 956.20L1088.88 956.20L1089.28 956.20L1089.68 956.20L1090.09 956.20L1090.49 956.20L1090.89 956.20L1091.30 956.20L1091.70 956.20L1092.10 956.19L1092.51 956.19L1092.91 956.19L1093.31 956.19L1093.72 956.19L1094.12 956.19L1094.52 956.19L1094.93 956.19L1095.33 956.19L1095.73 956.19L1096.14 956.18L1096.54 956.18L1096.94 956.18L1097.35 956.18L1097.75 956.18L1098.15 956.18L1098.56 956.17L1098.96 956.17L1099.36 956.17L1099.77 956.17L1100.17 956.17L1100.57 956.17L1100.98 956.16L1101.38 956.16L1101.79 956.16L1102.19 956.16L1102.59 956.16L1103.00 956.15L1103.40 956.15L1103.80 956.15L1104.21 956.15L1104.61 956.14L1105.01 956.14L1105.42 956.14L1105.82 956.14L1106.22 956.13L1106.63 956.13L1107.03 956.13L1107.43 956.12L1107.84 956.12L1108.24 956.12L1108.64 956.11L1109.05 956.11L1109.45 956.11L1109.85 956.10L1110.26 956.10L1110.66 956.09L1111.06 956.09L1111.47 956.08L1111.87 956.08L1112.27 956.08L1112.68 956.07L1113.08 956.07L1113.48 956.06L1113.89 956.05L1114.29 956.05L1114.69 956.04L1115.10 956.04L1115.50 956.03L1115.90 956.02L1116.31 956.02L1116.71 956.01L1117.11 956.00L1117.52 956.00L1117.92 955.99L1118.32 955.98L1118.73 955.97L1119.13 955.96L1119.53 955.96L1119.94 955.95L1120.34 955.94L1120.74 955.93L1121.15 955.92L1121.55 955.91L1121.95 955.90L1122.36 955.89L1122.76 955.88L1123.17 955.86L1123.57 955.85L1123.97 955.84L1124.38 955.83L1124.78 955.81L1125.18 955.80L1125.59 955.79L1125.99 955.77L1126.39 955.76L1126.80 955.74L1127.20 955.73L1127.60 955.71L1128.01 955.69L1128.41 955.67L1128.81 955.66L1129.22 955.64L1129.62 955.62L1130.02 955.60L1130.43 955.58L1130.83 955.56L1131.23 955.53L1131.64 955.51L1132.04 955.49L1132.44 955.46L1132.85 955.44L1133.25 955.41L1133.65 955.38L1134.06 955.36L1134.46 955.33L1134.86 955.30L1135.27 955.27L1135.67 955.24L1136.07 955.20L1136.48 955.17L1136.88 955.13L1137.28 955.10L1137.69 955.06L1138.09 955.02L1138.49 954.98L1138.90 954.94L1139.30 954.90L1139.70 954.85L1140.11 954.81L1140.51 954.76L1140.91 954.71L1141.32 954.66L1141.72 954.61L1142.12 954.56L1142.53 954.50L1142.93 954.45L1143.33 954.39L1143.74 954.33L1144.14 954.26L1144.55 954.20L1144.95 954.13L1145.35 954.06L1145.76 953.99L1146.16 953.92L1146.56 953.84L1146.97 953.76L1147.37 953.68L1147.77 953.59L1148.18 953.51L1148.58 953.42L1148.98 953.32L1149.39 953.23L1149.79 953.13L1150.19 953.03L1150.60 952.92L1151.00 952.81L1151.40 952.70L1151.81 952.58L1152.21 952.46L1152.61 952.34L1153.02 952.21L1153.42 952.08L1153.82 951.94L1154.23 951.80L1154.63 951.65L1155.03 951.50L1155.44 951.35L1155.84 951.19L1156.24 951.02L1156.65 950.85L1157.05 950.67L1157.45 950.49L1157.86 950.30L1158.26 950.10L1158.66 949.90L1159.07 949.69L1159.47 949.48L1159.87 949.25L1160.28 949.03L1160.68 948.79L1161.08 948.54L1161.49 948.29L1161.89 948.03L1162.29 947.76L1162.70 947.48L1163.10 947.20L1163.50 946.90L1163.91 946.59L1164.31 946.28L1164.71 945.95L1165.12 945.61L1165.52 945.27L1165.93 944.91L1166.33 944.54L1166.73 944.15L1167.14 943.76L1167.54 943.35L1167.94 942.93L1168.35 942.50L1168.75 942.05L1169.15 941.58L1169.56 941.11L1169.96 940.61L1170.36 940.11L1170.77 939.58L1171.17 939.04L1171.57 938.48L1171.98 937.90L1172.38 937.31L1172.78 936.70L1173.19 936.06L1173.59 935.41L1173.99 934.74L1174.40 934.04L1174.80 933.32L1175.20 932.58L1175.61 931.82L1176.01 931.04L1176.41 930.22L1176.82 929.39L1177.22 928.53L1177.62 927.64L1178.03 926.72L1178.43 925.78L1178.83 924.80L1179.24 923.80L1179.64 922.76L1180.04 921.70L1180.45 920.60L1180.85 919.47L1181.25 918.30L1181.66 917.10L1182.06 915.86L1182.46 914.59L1182.87 913.28L1183.27 911.93L1183.67 910.53L1184.08 909.10L1184.48 907.63L1184.88 906.11L1185.29 904.55L1185.69 902.94L1186.09 901.28L1186.50 899.58L1186.90 897.83L1187.31 896.03L1187.71 894.18L1188.11 892.28L1188.52 890.32L1188.92 888.31L1189.32 886.25L1189.73 884.12L1190.13 881.94L1190.53 879.70L1190.94 877.40L1191.34 875.04L1191.74 872.62L1192.15 870.13L1192.55 867.58L1192.95 864.96L1193.36 862.28L1193.76 859.52L1194.16 856.70L1194.57 853.81L1194.97 850.85L1195.37 847.82L1195.78 844.71L1196.18 841.53L1196.58 838.28L1196.99 834.95L1197.39 831.54L1197.79 828.06L1198.20 824.51L1198.60 820.87L1199.00 817.16L1199.41 813.38L1199.81 809.51L1200.21 805.57L1200.62 801.55L1201.02 797.45L1201.42 793.27L1201.83 789.02L1202.23 784.69L1202.63 780.29L1203.04 775.81L1203.44 771.26L1203.84 766.64L1204.25 761.95L1204.65 757.19L1205.05 752.36L1205.46 747.46L1205.86 742.51L1206.26 737.49L1206.67 732.41L1207.07 727.28L1207.47 722.10L1207.88 716.87L1208.28 711.59L1208.69 706.27L1209.09 700.92L1209.49 695.53L1209.90 690.11L1210.30 684.66L1210.70 679.20L1211.11 673.72L1211.51 668.24L1211.91 662.75L1212.32 657.26L1212.72 651.78L1213.12 646.32L1213.53 640.88L1213.93 635.46L1214.33 630.08L1214.74 624.75L1215.14 619.46L1215.54 614.23L1215.95 609.06L1216.35 603.96L1216.75 598.94L1217.16 594.01L1217.56 589.17L1217.96 584.44L1218.37 579.81L1218.77 575.30L1219.17 570.92L1219.58 566.67L1219.98 562.56L1220.38 558.60L1220.79 554.79L1221.19 551.15L1221.59 547.67L1222.00 544.37L1222.40 541.25L1222.80 538.33L1223.21 535.59L1223.61 533.05L1224.01 530.72L1224.42 528.60L1224.82 526.69L1225.22 525.00L1225.63 523.53L1226.03 522.29L1226.43 521.27L1226.84 520.48L1227.24 519.92L1227.64 519.60L1228.05 519.50L1228.45 519.64L1228.85 520.02L1229.26 520.62L1229.66 521.45L1230.07 522.52L1230.47 523.81L1230.87 525.32L1231.28 527.05L1231.68 529.00L1232.08 531.17L1232.49 533.54L1232.89 536.12L1233.29 538.89L1233.70 541.86L1234.10 545.01L1234.50 548.35L1234.91 551.85L1235.31 555.53L1235.71 559.37L1236.12 563.36L1236.52 567.50L1236.92 571.78L1237.33 576.18L1237.73 580.72L1238.13 585.36L1238.54 590.12L1238.94 594.98L1239.34 599.93L1239.75 604.96L1240.15 610.07L1240.55 615.26L1240.96 620.50L1241.36 625.80L1241.76 631.14L1242.17 636.53L1242.57 641.95L1242.97 647.40L1243.38 652.87L1243.78 658.35L1244.18 663.83L1244.59 669.32L1244.99 674.81L1245.39 680.28L1245.80 685.74L1246.20 691.18L1246.60 696.60L1247.01 701.98L1247.41 707.33L1247.81 712.64L1248.22 717.91L1248.62 723.13L1249.02 728.30L1249.43 733.42L1249.83 738.49L1250.23 743.49L1250.64 748.44L1251.04 753.32L1251.45 758.13L1251.85 762.88L1252.25 767.56L1252.66 772.17L1253.06 776.70L1253.46 781.17L1253.87 785.55L1254.27 789.87L1254.67 794.10L1255.08 798.26L1255.48 802.35L1255.88 806.35L1256.29 810.28L1256.69 814.13L1257.09 817.90L1257.50 821.60L1257.90 825.22L1258.30 828.76L1258.71 832.22L1259.11 835.61L1259.51 838.93L1259.92 842.16L1260.32 845.33L1260.72 848.42L1261.13 851.44L1261.53 854.39L1261.93 857.27L1262.34 860.07L1262.74 862.81L1263.14 865.48L1263.55 868.09L1263.95 870.63L1264.35 873.10L1264.76 875.51L1265.16 877.86L1265.56 880.15L1265.97 882.38L1266.37 884.55L1266.77 886.66L1267.18 888.71L1267.58 890.71L1267.98 892.66L1268.39 894.55L1268.79 896.39L1269.19 898.18L1269.60 899.92L1270.00 901.61L1270.40 903.26L1270.81 904.86L1271.21 906.41L1271.61 907.92L1272.02 909.39L1272.42 910.81L1272.83 912.20L1273.23 913.54L1273.63 914.84L1274.04 916.11L1274.44 917.34L1274.84 918.54L1275.25 919.69L1275.65 920.82L1276.05 921.91L1276.46 922.97L1276.86 924.00L1277.26 925.00L1277.67 925.97L1278.07 926.90L1278.47 927.82L1278.88 928.70L1279.28 929.56L1279.68 930.39L1280.09 931.19L1280.49 931.97L1280.89 932.73L1281.30 933.47L1281.70 934.18L1282.10 934.87L1282.51 935.54L1282.91 936.19L1283.31 936.82L1283.72 937.43L1284.12 938.02L1284.52 938.59L1284.93 939.15L1285.33 939.69L1285.73 940.21L1286.14 940.71L1286.54 941.20L1286.94 941.68L1287.35 942.14L1287.75 942.58L1288.15 943.01L1288.56 943.43L1288.96 943.84L1289.36 944.23L1289.77 944.61L1290.17 944.98L1290.57 945.34L1290.98 945.68L1291.38 946.02L1291.78 946.34L1292.19 946.65L1292.59 946.96L1292.99 947.25L1293.40 947.54L1293.80 947.81L1294.21 948.08L1294.61 948.34L1295.01 948.59L1295.42 948.84L1295.82 949.07L1296.22 949.30L1296.63 949.52L1297.03 949.73L1297.43 949.94L1297.84 950.14L1298.24 950.34L1298.64 950.52L1299.05 950.71L1299.45 950.88L1299.85 951.05L1300.26 951.22L1300.66 951.38L1301.06 951.53L1301.47 951.68L1301.87 951.83L1302.27 951.97L1302.68 952.10L1303.08 952.24L1303.48 952.36L1303.89 952.49L1304.29 952.61L1304.69 952.72L1305.10 952.83L1305.50 952.94L1305.90 953.05L1306.31 953.15L1306.71 953.25L1307.11 953.34L1307.52 953.44L1307.92 953.53L1308.32 953.61L1308.73 953.70L1309.13 953.78L1309.53 953.85L1309.94 953.93L1310.34 954.00L1310.74 954.08L1311.15 954.14L1311.55 954.21L1311.95 954.28L1312.36 954.34L1312.76 954.40L1313.16 954.46L1313.57 954.51L1313.97 954.57L1314.37 954.62L1314.78 954.67L1315.18 954.72L1315.59 954.77L1315.99 954.82L1316.39 954.86L1316.80 954.91L1317.20 954.95L1317.60 954.99L1318.01 955.03L1318.41 955.07L1318.81 955.10L1319.22 955.14L1319.62 955.18L1320.02 955.21L1320.43 955.24L1320.83 955.27L1321.23 955.30L1321.64 955.33L1322.04 955.36L1322.44 955.39L1322.85 955.42L1323.25 955.44L1323.65 955.47L1324.06 955.49L1324.46 955.52L1324.86 955.54L1325.27 955.56L1325.67 955.58L1326.07 955.60L1326.48 955.62L1326.88 955.64L1327.28 955.66L1327.69 955.68L1328.09 955.70L1328.49 955.71L1328.90 955.73L1329.30 955.74L1329.70 955.76L1330.11 955.78L1330.51 955.79L1330.91 955.80L1331.32 955.82L1331.72 955.83L1332.12 955.84L1332.53 955.85L1332.93 955.87L1333.33 955.88L1333.74 955.89L1334.14 955.90L1334.54 955.91L1334.95 955.92L1335.35 955.93L1335.75 955.94L1336.16 955.95L1336.56 955.96L1336.97 955.97L1337.37 955.97L1337.77 955.98L1338.18 955.99L1338.58 956.00L1338.98 956.01L1339.39 956.01L1339.79 956.02L1340.19 956.03L1340.60 956.03L1341.00 956.04L1341.40 956.04L1341.81 956.05L1342.21 956.06L1342.61 956.06L1343.02 956.07L1343.42 956.07L1343.82 956.08L1344.23 956.08L1344.63 956.09L1345.03 956.09L1345.44 956.09L1345.84 956.10L1346.24 956.10L1346.65 956.11L1347.05 956.11L1347.45 956.11L1347.86 956.12L1348.26 956.12L1348.66 956.12L1349.07 956.13L1349.47 956.13L1349.87 956.13L1350.28 956.14L1350.68 956.14L1351.08 956.14L1351.49 956.14L1351.89 956.15L1352.29 956.15L1352.70 956.15L1353.10 956.15L1353.50 956.16L1353.91 956.16L1354.31 956.16L1354.71 956.16L1355.12 956.16L1355.52 956.17L1355.92 956.17L1356.33 956.17L1356.73 956.17L1357.13 956.17L1357.54 956.18L1357.94 956.18L1358.35 956.18L1358.75 956.18L1359.15 956.18L1359.56 956.18L1359.96 956.18L1360.36 956.19L1360.77 956.19L1361.17 956.19L1361.57 956.19L1361.98 956.19L1362.38 956.19L1362.78 956.19L1363.19 956.19L1363.59 956.19L1363.99 956.20L1364.40 956.20L1364.80 956.20L1365.20 956.20L1365.61 956.20L1366.01 956.20L1366.41 956.20L1366.82 956.20L1367.22 956.20L1367.62 956.20L1368.03 956.20L1368.43 956.20L1368.83 956.20L1369.24 956.21L1369.64 956.21L1370.04 956.21L1370.45 956.21L1370.85 956.21L1371.25 956.21L1371.66 956.21L1372.06 956.21L1372.46 956.21L1372.87 956.21L1373.27 956.21L1373.67 956.21L1374.08 956.21L1374.48 956.21L1374.88 956.21L1375.29 956.21L1375.69 956.21L1376.09 956.21L1376.50 956.21L1376.90 956.21L1377.30 956.21L1377.71 956.21L1378.11 956.21L1378.51 956.22L1378.92 956.22L1379.32 956.22L1379.73 956.22L1380.13 956.22L1380.53 956.22L1380.94 956.22L1381.34 956.22L1381.74 956.22L1382.15 956.22L1382.55 956.22L1382.95 956.22L1383.36 956.22L1383.76 956.22L1384.16 956.22L1384.57 956.22L1384.97 956.22L1385.37 956.22L1385.78 956.22L1386.18 956.22L1386.58 956.22L1386.99 956.22L1387.39 956.22L1387.79 956.22L1388.20 956.22L1388.60 956.22L1389.00 956.22L1389.41 956.22L1389.81 956.22L1390.21 956.22L1390.62 956.22L1391.02 956.22L1391.42 956.22L1391.83 956.22L1392.23 956.22L1392.63 956.22L1393.04 956.22L1393.44 956.22L1393.84 956.22L1394.25 956.22L1394.65 956.22L1395.05 956.22L1395.46 956.22L1395.86 956.22L1396.26 956.22L1396.67 956.22L1397.07 956.22L1397.47 956.22L1397.88 956.22L1398.28 956.22L1398.68 956.22L1399.09 956.22L1399.49 956.22L1399.89 956.22L1400.30 956.22L1400.70 956.22L1401.11 956.22L1401.51 956.22L1401.91 956.22L1402.32 956.22L1402.72 956.22L1403.12 956.22L1403.53 956.22L1403.93 956.22L1404.33 956.22L1404.74 956.22L1405.14 956.22" fill="none" stroke="#ffc800" stroke-width="1.4"/>
<path d="M1042.49 956.22L1042.89 956.22L1043.29 956.22L1043.70 956.22L1044.10 956.22L1044.50 956.22L1044.91 956.22L1045.31 956.22L1045.71 956.22L1046.12 956.22L1046.52 956.22L1046.92 956.22L1047.33 956.22L1047.73 956.22L1048.13 956.22L1048.54 956.22L1048.94 956.22L1049.34 956.22L1049.75 956.22L1050.15 956.22L1050.55 956.22L1050.96 956.22L1051.36 956.22L1051.76 956.22L1052.17 956.22L1052.57 956.22L1052.97 956.22L1053.38 956.22L1053.78 956.22L1054.18 956.22L1054.59 956.22L1054.99 956.22L1055.39 956.22L1055.80 956.22L1056.20 956.22L1056.60 956.22L1057.01 956.22L1057.41 956.22L1057.81 956.22L1058.22 956.22L1058.62 956.22L1059.03 956.22L1059.43 956.22L1059.83 956.22L1060.24 956.22L1060.64 956.22L1061.04 956.22L1061.45 956.22L1061.85 956.22L1062.25 956.22L1062.66 956.22L1063.06 956.22L1063.46 956.22L1063.87 956.22L1064.27 956.22L1064.67 956.22L1065.08 956.22L1065.48 956.22L1065.88 956.22L1066.29 956.22L1066.69 956.22L1067.09 956.22L1067.50 956.22L1067.90 956.22L1068.30 956.22L1068.71 956.22L1069.11 956.22L1069.51 956.22L1069.92 956.22L1070.32 956.22L1070.72 956.22L1071.13 956.22L1071.53 956.22L1071.93 956.22L1072.34 956.22L1072.74 956.22L1073.14 956.22L1073.55 956.22L1073.95 956.22L1074.35 956.22L1074.76 956.22L1075.16 956.22L1075.56 956.22L1075.97 956.22L1076.37 956.22L1076.77 956.22L1077.18 956.22L1077.58 956.22L1077.98 956.22L1078.39 956.22L1078.79 956.22L1079.19 956.22L1079.60 956.22L1080.00 956.22L1080.41 956.22L1080.81 956.22L1081.21 956.22L1081.62 956.22L1082.02 956.22L1082.42 956.22L1082.83 956.22L1083.23 956.22L1083.63 956.22L1084.04 956.22L1084.44 956.22L1084.84 956.22L1085.25 956.22L1085.65 956.22L1086.05 956.22L1086.46 956.22L1086.86 956.22L1087.26 956.22L1087.67 956.22L1088.07 956.22L1088.47 956.22L1088.88 956.22L1089.28 956.22L1089.68 956.22L1090.09 956.22L1090.49 956.22L1090.89 956.22L1091.30 956.22L1091.70 956.22L1092.10 956.22L1092.51 956.22L1092.91 956.22L1093.31 956.22L1093.72 956.22L1094.12 956.22L1094.52 956.22L1094.93 956.22L1095.33 956.22L1095.73 956.22L1096.14 956.22L1096.54 956.22L1096.94 956.22L1097.35 956.22L1097.75 956.22L1098.15 956.22L1098.56 956.22L1098.96 956.22L1099.36 956.22L1099.77 956.22L1100.17 956.22L1100.57 956.22L1100.98 956.22L1101.38 956.22L1101.79 956.22L1102.19 956.22L1102.59 956.22L1103.00 956.22L1103.40 956.22L1103.80 956.22L1104.21 956.22L1104.61 956.22L1105.01 956.22L1105.42 956.22L1105.82 956.22L1106.22 956.22L1106.63 956.22L1107.03 956.22L1107.43 956.22L1107.84 956.22L1108.24 956.22L1108.64 956.22L1109.05 956.22L1109.45 956.22L1109.85 956.22L1110.26 956.22L1110.66 956.22L1111.06 956.22L1111.47 956.22L1111.87 956.22L1112.27 956.22L1112.68 956.22L1113.08 956.22L1113.48 956.22L1113.89 956.22L1114.29 956.22L1114.69 956.22L1115.10 956.22L1115.50 956.22L1115.90 956.22L1116.31 956.22L1116.71 956.22L1117.11 956.22L1117.52 956.22L1117.92 956.22L1118.32 956.22L1118.73 956.22L1119.13 956.22L1119.53 956.22L1119.94 956.22L1120.34 956.22L1120.74 956.22L1121.15 956.22L1121.55 956.22L1121.95 956.22L1122.36 956.22L1122.76 956.22L1123.17 956.22L1123.57 956.22L1123.97 956.22L1124.38 956.22L1124.78 956.22L1125.18 956.22L1125.59 956.22L1125.99 956.22L1126.39 956.22L1126.80 956.22L1127.20 956.22L1127.60 956.22L1128.01 956.22L1128.41 956.22L1128.81 956.22L1129.22 956.22L1129.62 956.22L1130.02 956.22L1130.43 956.22L1130.83 956.22L1131.23 956.22L1131.64 956.22L1132.04 956.22L1132.44 956.22L1132.85 956.22L1133.25 956.22L1133.65 956.22L1134.06 956.22L1134.46 956.22L1134.86 956.22L1135.27 956.22L1135.67 956.22L1136.07 956.22L1136.48 956.22L1136.88 956.22L1137.28 956.22L1137.69 956.22L1138.09 956.22L1138.49 956.22L1138.90 956.22L1139.30 956.22L1139.70 956.22L1140.11 956.22L1140.51 956.22L1140.91 956.22L1141.32 956.22L1141.72 956.22L1142.12 956.22L1142.53 956.22L1142.93 956.21L1143.33 956.21L1143.74 956.21L1144.14 956.21L1144.55 956.21L1144.95 956.21L1145.35 956.21L1145.76 956.20L1146.16 956.20L1146.56 956.20L1146.97 956.20L1147.37 956.19L1147.77 956.19L1148.18 956.19L1148.58 956.18L1148.98 956.18L1149.39 956.18L1149.79 956.17L1150.19 956.17L1150.60 956.16L1151.00 956.16L1151.40 956.15L1151.81 956.14L1152.21 956.13L1152.61 956.12L1153.02 956.12L1153.42 956.11L1153.82 956.09L1154.23 956.08L1154.63 956.07L1155.03 956.06L1155.44 956.04L1155.84 956.02L1156.24 956.01L1156.65 955.99L1157.05 955.97L1157.45 955.94L1157.86 955.92L1158.26 955.89L1158.66 955.86L1159.07 955.83L1159.47 955.80L1159.87 955.76L1160.28 955.72L1160.68 955.68L1161.08 955.64L1161.49 955.59L1161.89 955.54L1162.29 955.48L1162.70 955.42L1163.10 955.35L1163.50 955.28L1163.91 955.21L1164.31 955.13L1164.71 955.04L1165.12 954.95L1165.52 954.85L1165.93 954.75L1166.33 954.63L1166.73 954.51L1167.14 954.38L1167.54 954.25L1167.94 954.10L1168.35 953.94L1168.75 953.77L1169.15 953.60L1169.56 953.41L1169.96 953.20L1170.36 952.99L1170.77 952.76L1171.17 952.52L1171.57 952.26L1171.98 951.98L1172.38 951.69L1172.78 951.38L1173.19 951.05L1173.59 950.71L1173.99 950.34L1174.40 949.95L1174.80 949.54L1175.20 949.10L1175.61 948.64L1176.01 948.15L1176.41 947.64L1176.82 947.10L1177.22 946.53L1177.62 945.92L1178.03 945.29L1178.43 944.62L1178.83 943.92L1179.24 943.18L1179.64 942.40L1180.04 941.59L1180.45 940.73L1180.85 939.83L1181.25 938.89L1181.66 937.90L1182.06 936.87L1182.46 935.78L1182.87 934.65L1183.27 933.46L1183.67 932.22L1184.08 930.93L1184.48 929.58L1184.88 928.16L1185.29 926.69L1185.69 925.16L1186.09 923.56L1186.50 921.90L1186.90 920.17L1187.31 918.37L1187.71 916.50L1188.11 914.55L1188.52 912.54L1188.92 910.44L1189.32 908.27L1189.73 906.02L1190.13 903.70L1190.53 901.28L1190.94 898.79L1191.34 896.21L1191.74 893.55L1192.15 890.80L1192.55 887.96L1192.95 885.03L1193.36 882.02L1193.76 878.91L1194.16 875.71L1194.57 872.42L1194.97 869.03L1195.37 865.56L1195.78 861.99L1196.18 858.32L1196.58 854.56L1196.99 850.71L1197.39 846.77L1197.79 842.73L1198.20 838.60L1198.60 834.38L1199.00 830.07L1199.41 825.67L1199.81 821.17L1200.21 816.60L1200.62 811.93L1201.02 807.18L1201.42 802.35L1201.83 797.44L1202.23 792.45L1202.63 787.39L1203.04 782.25L1203.44 777.04L1203.84 771.77L1204.25 766.43L1204.65 761.03L1205.05 755.57L1205.46 750.06L1205.86 744.50L1206.26 738.89L1206.67 733.24L1207.07 727.56L1207.47 721.84L1207.88 716.10L1208.28 710.33L1208.69 704.55L1209.09 698.75L1209.49 692.94L1209.90 687.14L1210.30 681.34L1210.70 675.55L1211.11 669.77L1211.51 664.02L1211.91 658.29L1212.32 652.60L1212.72 646.94L1213.12 641.34L1213.53 635.78L1213.93 630.29L1214.33 624.85L1214.74 619.49L1215.14 614.21L1215.54 609.01L1215.95 603.90L1216.35 598.89L1216.75 593.98L1217.16 589.18L1217.56 584.50L1217.96 579.94L1218.37 575.50L1218.77 571.19L1219.17 567.03L1219.58 563.01L1219.98 559.13L1220.38 555.42L1220.79 551.86L1221.19 548.46L1221.59 545.24L1222.00 542.19L1222.40 539.31L1222.80 536.62L1223.21 534.11L1223.61 531.79L1224.01 529.67L1224.42 527.74L1224.82 526.00L1225.22 524.47L1225.63 523.14L1226.03 522.02L1226.43 521.10L1226.84 520.39L1227.24 519.88L1227.64 519.59L1228.05 519.50L1228.45 519.63L1228.85 519.96L1229.26 520.51L1229.66 521.26L1230.07 522.22L1230.47 523.39L1230.87 524.76L1231.28 526.33L1231.68 528.10L1232.08 530.07L1232.49 532.24L1232.89 534.59L1233.29 537.14L1233.70 539.86L1234.10 542.77L1234.50 545.86L1234.91 549.12L1235.31 552.55L1235.71 556.14L1236.12 559.89L1236.52 563.79L1236.92 567.84L1237.33 572.03L1237.73 576.37L1238.13 580.83L1238.54 585.42L1238.94 590.12L1239.34 594.95L1239.75 599.88L1240.15 604.91L1240.55 610.03L1240.96 615.25L1241.36 620.55L1241.76 625.92L1242.17 631.37L1242.57 636.87L1242.97 642.44L1243.38 648.06L1243.78 653.72L1244.18 659.42L1244.59 665.15L1244.99 670.91L1245.39 676.69L1245.80 682.48L1246.20 688.29L1246.60 694.09L1247.01 699.89L1247.41 705.69L1247.81 711.47L1248.22 717.23L1248.62 722.97L1249.02 728.68L1249.43 734.36L1249.83 740.00L1250.23 745.60L1250.64 751.15L1251.04 756.65L1251.45 762.10L1251.85 767.49L1252.25 772.81L1252.66 778.08L1253.06 783.27L1253.46 788.39L1253.87 793.44L1254.27 798.42L1254.67 803.31L1255.08 808.13L1255.48 812.86L1255.88 817.51L1256.29 822.07L1256.69 826.54L1257.09 830.93L1257.50 835.22L1257.90 839.43L1258.30 843.54L1258.71 847.56L1259.11 851.48L1259.51 855.31L1259.92 859.05L1260.32 862.70L1260.72 866.25L1261.13 869.71L1261.53 873.08L1261.93 876.35L1262.34 879.53L1262.74 882.62L1263.14 885.62L1263.55 888.53L1263.95 891.35L1264.35 894.08L1264.76 896.73L1265.16 899.29L1265.56 901.77L1265.97 904.16L1266.37 906.48L1266.77 908.71L1267.18 910.86L1267.58 912.94L1267.98 914.94L1268.39 916.87L1268.79 918.73L1269.19 920.51L1269.60 922.23L1270.00 923.88L1270.40 925.47L1270.81 926.99L1271.21 928.45L1271.61 929.85L1272.02 931.19L1272.42 932.47L1272.83 933.70L1273.23 934.88L1273.63 936.00L1274.04 937.07L1274.44 938.10L1274.84 939.08L1275.25 940.01L1275.65 940.90L1276.05 941.75L1276.46 942.56L1276.86 943.33L1277.26 944.06L1277.67 944.76L1278.07 945.42L1278.47 946.05L1278.88 946.64L1279.28 947.21L1279.68 947.74L1280.09 948.25L1280.49 948.73L1280.89 949.19L1281.30 949.62L1281.70 950.03L1282.10 950.41L1282.51 950.78L1282.91 951.12L1283.31 951.44L1283.72 951.75L1284.12 952.04L1284.52 952.31L1284.93 952.56L1285.33 952.81L1285.73 953.03L1286.14 953.24L1286.54 953.44L1286.94 953.63L1287.35 953.81L1287.75 953.97L1288.15 954.13L1288.56 954.27L1288.96 954.41L1289.36 954.54L1289.77 954.66L1290.17 954.77L1290.57 954.87L1290.98 954.97L1291.38 955.06L1291.78 955.15L1292.19 955.22L1292.59 955.30L1292.99 955.37L1293.40 955.43L1293.80 955.49L1294.21 955.55L1294.61 955.60L1295.01 955.65L1295.42 955.69L1295.82 955.73L1296.22 955.77L1296.63 955.81L1297.03 955.84L1297.43 955.87L1297.84 955.90L1298.24 955.92L1298.64 955.95L1299.05 955.97L1299.45 955.99L1299.85 956.01L1300.26 956.03L1300.66 956.04L1301.06 956.06L1301.47 956.07L1301.87 956.09L1302.27 956.10L1302.68 956.11L1303.08 956.12L1303.48 956.13L1303.89 956.14L1304.29 956.14L1304.69 956.15L1305.10 956.16L1305.50 956.16L1305.90 956.17L1306.31 956.17L1306.71 956.18L1307.11 956.18L1307.52 956.19L1307.92 956.19L1308.32 956.19L1308.73 956.19L1309.13 956.20L1309.53 956.20L1309.94 956.20L1310.34 956.20L1310.74 956.21L1311.15 956.21L1311.55 956.21L1311.95 956.21L1312.36 956.21L1312.76 956.21L1313.16 956.21L1313.57 956.22L1313.97 956.22L1314.37 956.22L1314.78 956.22L1315.18 956.22L1315.59 956.22L1315.99 956.22L1316.39 956.22L1316.80 956.22L1317.20 956.22L1317.60 956.22L1318.01 956.22L1318.41 956.22L1318.81 956.22L1319.22 956.22L1319.62 956.22L1320.02 956.22L1320.43 956.22L1320.83 956.22L1321.23 956.22L1321.64 956.22L1322.04 956.22L1322.44 956.22L1322.85 956.22L1323.25 956.22L1323.65 956.22L1324.06 956.22L1324.46 956.22L1324.86 956.22L1325.27 956.22L1325.67 956.22L1326.07 956.22L1326.48 956.22L1326.88 956.22L1327.28 956.22L1327.69 956.22L1328.09 956.22L1328.49 956.22L1328.90 956.22L1329.30 956.22L1329.70 956.22L1330.11 956.22L1330.51 956.22L1330.91 956.22L1331.32 956.22L1331.72 956.22L1332.12 956.22L1332.53 956.22L1332.93 956.22L1333.33 956.22L1333.74 956.22L1334.14 956.22L1334.54 956.22L1334.95 956.22L1335.35 956.22L1335.75 956.22L1336.16 956.22L1336.56 956.22L1336.97 956.22L1337.37 956.22L1337.77 956.22L1338.18 956.22L1338.58 956.22L1338.98 956.22L1339.39 956.22L1339.79 956.22L1340.19 956.22L1340.60 956.22L1341.00 956.22L1341.40 956.22L1341.81 956.22L1342.21 956.22L1342.61 956.22L1343.02 956.22L1343.42 956.22L1343.82 956.22L1344.23 956.22L1344.63 956.22L1345.03 956.22L1345.44 956.22L1345.84 956.22L1346.24 956.22L1346.65 956.22L1347.05 956.22L1347.45 956.22L1347.86 956.22L1348.26 956.22L1348.66 956.22L1349.07 956.22L1349.47 956.22L1349.87 956.22L1350.28 956.22L1350.68 956.22L1351.08 956.22L1351.49 956.22L1351.89 956.22L1352.29 956.22L1352.70 956.22L1353.10 956.22L1353.50 956.22L1353.91 956.22L1354.31 956.22L1354.71 956.22L1355.12 956.22L1355.52 956.22L1355.92 956.22L1356.33 956.22L1356.73 956.22L1357.13 956.22L1357.54 956.22L1357.94 956.22L1358.35 956.22L1358.75 956.22L1359.15 956.22L1359.56 956.22L1359.96 956.22L1360.36 956.22L1360.77 956.22L1361.17 956.22L1361.57 956.22L1361.98 956.22L1362.38 956.22L1362.78 956.22L1363.19 956.22L1363.59 956.22L1363.99 956.22L1364.40 956.22L1364.80 956.22L1365.20 956.22L1365.61 956.22L1366.01 956.22L1366.41 956.22L1366.82 956.22L1367.22 956.22L1367.62 956.22L1368.03 956.22L1368.43 956.22L1368.83 956.22L1369.24 956.22L1369.64 956.22L1370.04 956.22L1370.45 956.22L1370.85 956.22L1371.25 956.22L1371.66 956.22L1372.06 956.22L1372.46 956.22L1372.87 956.22L1373.27 956.22L1373.67 956.22L1374.08 956.22L1374.48 956.22L1374.88 956.22L1375.29 956.22L1375.69 956.22L1376.09 956.22L1376.50 956.22L1376.90 956.22L1377.30 956.22L1377.71 956.22L1378.11 956.22L1378.51 956.22L1378.92 956.22L1379.32 956.22L1379.73 956.22L1380.13 956.22L1380.53 956.22L1380.94 956.22L1381.34 956.22L1381.74 956.22L1382.15 956.22L1382.55 956.22L1382.95 956.22L1383.36 956.22L1383.76 956.22L1384.16 956.22L1384.57 956.22L1384.97 956.22L1385.37 956.22L1385.78 956.22L1386.18 956.22L1386.58 956.22L1386.99 956.22L1387.39 956.22L1387.79 956.22L1388.20 956.22L1388.60 956.22L1389.00 956.22L1389.41 956.22L1389.81 956.22L1390.21 956.22L1390.62 956.22L1391.02 956.22L1391.42 956.22L1391.83 956.22L1392.23 956.22L1392.63 956.22L1393.04 956.22L1393.44 956.22L1393.84 956.22L1394.25 956.22L1394.65 956.22L1395.05 956.22L1395.46 956.22L1395.86 956.22L1396.26 956.22L1396.67 956.22L1397.07 956.22L1397.47 956.22L1397.88 956.22L1398.28 956.22L1398.68 956.22L1399.09 956.22L1399.49 956.22L1399.89 956.22L1400.30 956.22L1400.70 956.22L1401.11 956.22L1401.51 956.22L1401.91 956.22L1402.32 956.22L1402.72 956.22L1403.12 956.22L1403.53 956.22L1403.93 956.22L1404.33 956.22L1404.74 956.22L1405.14 956.22" fill="none" stroke="#f02323" stroke-width="1.4"/>
<path d="M1042.49 952.36L1042.89 952.39L1043.29 952.41L1043.70 952.44L1044.10 952.46L1044.50 952.49L1044.91 952.51L1045.31 952.53L1045.71 952.56L1046.12 952.58L1046.52 952.60L1046.92 952.62L1047.33 952.64L1047.73 952.65L1048.13 952.67L1048.54 952.69L1048.94 952.70L1049.34 952.72L1049.75 952.73L1050.15 952.74L1050.55 952.75L1050.96 952.76L1051.36 952.77L1051.76 952.78L1052.17 952.79L1052.57 952.80L1052.97 952.80L1053.38 952.81L1053.78 952.81L1054.18 952.82L1054.59 952.82L1054.99 952.82L1055.39 952.82L1055.80 952.82L1056.20 952.82L1056.60 952.82L1057.01 952.81L1057.41 952.81L1057.81 952.80L1058.22 952.80L1058.62 952.79L1059.03 952.78L1059.43 952.77L1059.83 952.77L1060.24 952.76L1060.64 952.75L1061.04 952.74L1061.45 952.72L1061.85 952.71L1062.25 952.70L1062.66 952.69L1063.06 952.67L1063.46 952.66L1063.87 952.65L1064.27 952.63L1064.67 952.62L1065.08 952.60L1065.48 952.59L1065.88 952.57L1066.29 952.56L1066.69 952.54L1067.09 952.53L1067.50 952.51L1067.90 952.49L1068.30 952.46L1068.71 952.44L1069.11 952.41L1069.51 952.38L1069.92 952.35L1070.32 952.31L1070.72 952.28L1071.13 952.24L1071.53 952.21L1071.93 952.17L1072.34 952.13L1072.74 952.09L1073.14 952.05L1073.55 952.01L1073.95 951.97L1074.35 951.92L1074.76 951.88L1075.16 951.84L1075.56 951.79L1075.97 951.75L1076.37 951.70L1076.77 951.66L1077.18 951.62L1077.58 951.57L1077.98 951.53L1078.39 951.49L1078.79 951.45L1079.19 951.41L1079.60 951.36L1080.00 951.32L1080.41 951.27L1080.81 951.23L1081.21 951.19L1081.62 951.14L1082.02 951.09L1082.42 951.05L1082.83 951.00L1083.23 950.95L1083.63 950.91L1084.04 950.86L1084.44 950.81L1084.84 950.76L1085.25 950.71L1085.65 950.66L1086.05 950.60L1086.46 950.55L1086.86 950.50L1087.26 950.44L1087.67 950.38L1088.07 950.33L1088.47 950.27L1088.88 950.21L1089.28 950.15L1089.68 950.09L1090.09 950.03L1090.49 949.96L1090.89 949.90L1091.30 949.83L1091.70 949.76L1092.10 949.69L1092.51 949.62L1092.91 949.55L1093.31 949.47L1093.72 949.39L1094.12 949.31L1094.52 949.23L1094.93 949.15L1095.33 949.06L1095.73 948.97L1096.14 948.89L1096.54 948.79L1096.94 948.70L1097.35 948.61L1097.75 948.51L1098.15 948.41L1098.56 948.31L1098.96 948.21L1099.36 948.11L1099.77 948.00L1100.17 947.89L1100.57 947.79L1100.98 947.67L1101.38 947.56L1101.79 947.45L1102.19 947.33L1102.59 947.21L1103.00 947.08L1103.40 946.96L1103.80 946.83L1104.21 946.69L1104.61 946.56L1105.01 946.42L1105.42 946.28L1105.82 946.14L1106.22 945.99L1106.63 945.84L1107.03 945.69L1107.43 945.53L1107.84 945.38L1108.24 945.21L1108.64 945.05L1109.05 944.88L1109.45 944.71L1109.85 944.54L1110.26 944.36L1110.66 944.18L1111.06 943.99L1111.47 943.80L1111.87 943.59L1112.27 943.37L1112.68 943.15L1113.08 942.92L1113.48 942.68L1113.89 942.43L1114.29 942.18L1114.69 941.92L1115.10 941.66L1115.50 941.40L1115.90 941.13L1116.31 940.86L1116.71 940.59L1117.11 940.31L1117.52 940.04L1117.92 939.77L1118.32 939.50L1118.73 939.23L1119.13 938.97L1119.53 938.71L1119.94 938.45L1120.34 938.20L1120.74 937.96L1121.15 937.71L1121.55 937.45L1121.95 937.19L1122.36 936.93L1122.76 936.67L1123.17 936.41L1123.57 936.15L1123.97 935.89L1124.38 935.63L1124.78 935.37L1125.18 935.12L1125.59 934.87L1125.99 934.62L1126.39 934.38L1126.80 934.15L1127.20 933.93L1127.60 933.72L1128.01 933.51L1128.41 933.31L1128.81 933.13L1129.22 932.96L1129.62 932.78L1130.02 932.59L1130.43 932.41L1130.83 932.22L1131.23 932.04L1131.64 931.86L1132.04 931.69L1132.44 931.52L1132.85 931.36L1133.25 931.22L1133.65 931.09L1134.06 930.98L1134.46 930.89L1134.86 930.82L1135.27 930.77L1135.67 930.75L1136.07 930.75L1136.48 930.75L1136.88 930.76L1137.28 930.77L1137.69 930.78L1138.09 930.79L1138.49 930.81L1138.90 930.82L1139.30 930.84L1139.70 930.87L1140.11 930.89L1140.51 930.91L1140.91 930.93L1141.32 930.96L1141.72 930.99L1142.12 931.01L1142.53 931.04L1142.93 931.06L1143.33 931.09L1143.74 931.11L1144.14 931.14L1144.55 931.17L1144.95 931.21L1145.35 931.25L1145.76 931.30L1146.16 931.34L1146.56 931.39L1146.97 931.44L1147.37 931.48L1147.77 931.52L1148.18 931.56L1148.58 931.60L1148.98 931.62L1149.39 931.65L1149.79 931.66L1150.19 931.67L1150.60 931.66L1151.00 931.64L1151.40 931.61L1151.81 931.57L1152.21 931.52L1152.61 931.46L1153.02 931.39L1153.42 931.32L1153.82 931.23L1154.23 931.14L1154.63 931.04L1155.03 930.94L1155.44 930.83L1155.84 930.72L1156.24 930.61L1156.65 930.49L1157.05 930.38L1157.45 930.26L1157.86 930.13L1158.26 929.98L1158.66 929.81L1159.07 929.63L1159.47 929.43L1159.87 929.22L1160.28 928.99L1160.68 928.74L1161.08 928.49L1161.49 928.22L1161.89 927.94L1162.29 927.65L1162.70 927.34L1163.10 927.03L1163.50 926.70L1163.91 926.36L1164.31 926.02L1164.71 925.61L1165.12 925.15L1165.52 924.64L1165.93 924.10L1166.33 923.53L1166.73 922.94L1167.14 922.35L1167.54 921.76L1167.94 921.19L1168.35 920.65L1168.75 920.13L1169.15 919.61L1169.56 919.11L1169.96 918.61L1170.36 918.11L1170.77 917.62L1171.17 917.13L1171.57 916.63L1171.98 916.14L1172.38 915.64L1172.78 915.13L1173.19 914.61L1173.59 914.09L1173.99 913.56L1174.40 913.01L1174.80 912.45L1175.20 911.87L1175.61 911.28L1176.01 910.68L1176.41 910.07L1176.82 909.46L1177.22 908.83L1177.62 908.20L1178.03 907.55L1178.43 906.89L1178.83 906.21L1179.24 905.51L1179.64 904.79L1180.04 904.05L1180.45 903.28L1180.85 902.49L1181.25 901.67L1181.66 900.82L1182.06 899.93L1182.46 899.01L1182.87 898.04L1183.27 897.04L1183.67 895.99L1184.08 894.90L1184.48 893.77L1184.88 892.61L1185.29 891.40L1185.69 890.16L1186.09 888.88L1186.50 887.56L1186.90 886.20L1187.31 884.81L1187.71 883.38L1188.11 881.92L1188.52 880.39L1188.92 878.78L1189.32 877.08L1189.73 875.30L1190.13 873.44L1190.53 871.51L1190.94 869.51L1191.34 867.45L1191.74 865.32L1192.15 863.13L1192.55 860.82L1192.95 858.38L1193.36 855.82L1193.76 853.15L1194.16 850.40L1194.57 847.56L1194.97 844.66L1195.37 841.59L1195.78 838.33L1196.18 834.96L1196.58 831.55L1196.99 828.18L1197.39 824.90L1197.79 821.80L1198.20 818.92L1198.60 816.19L1199.00 813.52L1199.41 810.82L1199.81 808.01L1200.21 804.99L1200.62 801.68L1201.02 797.99L1201.42 793.84L1201.83 789.30L1202.23 784.44L1202.63 779.31L1203.04 773.99L1203.44 768.55L1203.84 763.04L1204.25 757.55L1204.65 752.13L1205.05 746.84L1205.46 741.59L1205.86 736.29L1206.26 730.96L1206.67 725.58L1207.07 720.17L1207.47 714.73L1207.88 709.27L1208.28 703.79L1208.69 698.30L1209.09 692.79L1209.49 687.28L1209.90 681.77L1210.30 676.26L1210.70 670.76L1211.11 665.20L1211.51 659.54L1211.91 653.81L1212.32 648.04L1212.72 642.26L1213.12 636.49L1213.53 630.77L1213.93 625.10L1214.33 619.53L1214.74 614.08L1215.14 608.78L1215.54 603.65L1215.95 598.69L1216.35 593.72L1216.75 588.71L1217.16 583.71L1217.56 578.76L1217.96 573.89L1218.37 569.16L1218.77 564.60L1219.17 560.26L1219.58 556.18L1219.98 552.39L1220.38 548.95L1220.79 545.89L1221.19 543.12L1221.59 540.43L1222.00 537.83L1222.40 535.33L1222.80 532.96L1223.21 530.75L1223.61 528.71L1224.01 526.87L1224.42 525.24L1224.82 523.87L1225.22 522.75L1225.63 521.88L1226.03 521.05L1226.43 520.29L1226.84 519.62L1227.24 519.11L1227.64 518.78L1228.05 518.68L1228.45 518.90L1228.85 519.46L1229.26 520.30L1229.66 521.36L1230.07 522.59L1230.47 523.93L1230.87 525.34L1231.28 526.81L1231.68 528.63L1232.08 530.82L1232.49 533.34L1232.89 536.13L1233.29 539.17L1233.70 542.41L1234.10 545.80L1234.50 549.31L1234.91 552.89L1235.31 556.50L1235.71 560.11L1236.12 563.93L1236.52 568.01L1236.92 572.33L1237.33 576.84L1237.73 581.51L1238.13 586.30L1238.54 591.18L1238.94 596.10L1239.34 601.03L1239.75 606.02L1240.15 611.10L1240.55 616.27L1240.96 621.53L1241.36 626.88L1241.76 632.29L1242.17 637.78L1242.57 643.34L1242.97 648.95L1243.38 654.63L1243.78 660.35L1244.18 666.12L1244.59 671.93L1244.99 677.77L1245.39 683.65L1245.80 689.55L1246.20 695.64L1246.60 702.07L1247.01 708.73L1247.41 715.54L1247.81 722.39L1248.22 729.20L1248.62 735.87L1249.02 742.31L1249.43 748.41L1249.83 754.08L1250.23 759.24L1250.64 763.85L1251.04 768.08L1251.45 772.00L1251.85 775.69L1252.25 779.22L1252.66 782.65L1253.06 786.06L1253.46 789.52L1253.87 793.09L1254.27 796.85L1254.67 800.87L1255.08 805.26L1255.48 809.97L1255.88 814.88L1256.29 819.86L1256.69 824.79L1257.09 829.56L1257.50 834.04L1257.90 838.12L1258.30 841.66L1258.71 844.81L1259.11 847.76L1259.51 850.53L1259.92 853.15L1260.32 855.63L1260.72 858.00L1261.13 860.27L1261.53 862.47L1261.93 864.62L1262.34 866.74L1262.74 868.83L1263.14 870.88L1263.55 872.88L1263.95 874.80L1264.35 876.63L1264.76 878.37L1265.16 879.99L1265.56 881.48L1265.97 882.82L1266.37 884.06L1266.77 885.24L1267.18 886.38L1267.58 887.47L1267.98 888.52L1268.39 889.52L1268.79 890.49L1269.19 891.43L1269.60 892.34L1270.00 893.21L1270.40 894.07L1270.81 894.90L1271.21 895.71L1271.61 896.50L1272.02 897.28L1272.42 898.05L1272.83 898.81L1273.23 899.57L1273.63 900.32L1274.04 901.07L1274.44 901.83L1274.84 902.57L1275.25 903.30L1275.65 904.01L1276.05 904.71L1276.46 905.40L1276.86 906.08L1277.26 906.75L1277.67 907.40L1278.07 908.04L1278.47 908.67L1278.88 909.29L1279.28 909.90L1279.68 910.50L1280.09 911.09L1280.49 911.68L1280.89 912.25L1281.30 912.81L1281.70 913.36L1282.10 913.91L1282.51 914.44L1282.91 914.97L1283.31 915.49L1283.72 916.00L1284.12 916.50L1284.52 917.00L1284.93 917.49L1285.33 917.97L1285.73 918.45L1286.14 918.92L1286.54 919.39L1286.94 919.85L1287.35 920.31L1287.75 920.77L1288.15 921.22L1288.56 921.67L1288.96 922.11L1289.36 922.56L1289.77 923.00L1290.17 923.44L1290.57 923.88L1290.98 924.31L1291.38 924.74L1291.78 925.17L1292.19 925.58L1292.59 926.00L1292.99 926.40L1293.40 926.80L1293.80 927.19L1294.21 927.57L1294.61 927.94L1295.01 928.30L1295.42 928.66L1295.82 929.00L1296.22 929.35L1296.63 929.71L1297.03 930.09L1297.43 930.47L1297.84 930.85L1298.24 931.24L1298.64 931.62L1299.05 932.00L1299.45 932.37L1299.85 932.74L1300.26 933.09L1300.66 933.42L1301.06 933.74L1301.47 934.04L1301.87 934.31L1302.27 934.56L1302.68 934.78L1303.08 934.97L1303.48 935.12L1303.89 935.24L1304.29 935.31L1304.69 935.34L1305.10 935.34L1305.50 935.33L1305.90 935.31L1306.31 935.29L1306.71 935.26L1307.11 935.22L1307.52 935.18L1307.92 935.14L1308.32 935.09L1308.73 935.03L1309.13 934.98L1309.53 934.92L1309.94 934.87L1310.34 934.81L1310.74 934.74L1311.15 934.66L1311.55 934.56L1311.95 934.44L1312.36 934.31L1312.76 934.18L1313.16 934.04L1313.57 933.90L1313.97 933.76L1314.37 933.63L1314.78 933.51L1315.18 933.41L1315.59 933.32L1315.99 933.25L1316.39 933.20L1316.80 933.15L1317.20 933.10L1317.60 933.05L1318.01 933.01L1318.41 932.96L1318.81 932.92L1319.22 932.89L1319.62 932.86L1320.02 932.83L1320.43 932.80L1320.83 932.79L1321.23 932.78L1321.64 932.77L1322.04 932.77L1322.44 932.79L1322.85 932.83L1323.25 932.88L1323.65 932.94L1324.06 933.01L1324.46 933.09L1324.86 933.18L1325.27 933.28L1325.67 933.38L1326.07 933.48L1326.48 933.58L1326.88 933.69L1327.28 933.80L1327.69 933.92L1328.09 934.07L1328.49 934.23L1328.90 934.40L1329.30 934.58L1329.70 934.77L1330.11 934.97L1330.51 935.18L1330.91 935.39L1331.32 935.61L1331.72 935.83L1332.12 936.05L1332.53 936.27L1332.93 936.49L1333.33 936.71L1333.74 936.92L1334.14 937.12L1334.54 937.32L1334.95 937.53L1335.35 937.73L1335.75 937.94L1336.16 938.15L1336.56 938.37L1336.97 938.58L1337.37 938.80L1337.77 939.01L1338.18 939.23L1338.58 939.44L1338.98 939.66L1339.39 939.87L1339.79 940.09L1340.19 940.30L1340.60 940.51L1341.00 940.72L1341.40 940.92L1341.81 941.13L1342.21 941.33L1342.61 941.53L1343.02 941.72L1343.42 941.92L1343.82 942.13L1344.23 942.32L1344.63 942.52L1345.03 942.72L1345.44 942.92L1345.84 943.12L1346.24 943.31L1346.65 943.50L1347.05 943.69L1347.45 943.87L1347.86 944.06L1348.26 944.23L1348.66 944.41L1349.07 944.58L1349.47 944.74L1349.87 944.90L1350.28 945.05L1350.68 945.20L1351.08 945.35L1351.49 945.50L1351.89 945.64L1352.29 945.77L1352.70 945.91L1353.10 946.04L1353.50 946.17L1353.91 946.30L1354.31 946.42L1354.71 946.54L1355.12 946.65L1355.52 946.76L1355.92 946.87L1356.33 946.98L1356.73 947.08L1357.13 947.19L1357.54 947.29L1357.94 947.39L1358.35 947.49L1358.75 947.58L1359.15 947.68L1359.56 947.77L1359.96 947.87L1360.36 947.96L1360.77 948.05L1361.17 948.14L1361.57 948.22L1361.98 948.31L1362.38 948.40L1362.78 948.48L1363.19 948.56L1363.59 948.64L1363.99 948.72L1364.40 948.80L1364.80 948.88L1365.20 948.96L1365.61 949.04L1366.01 949.11L1366.41 949.19L1366.82 949.26L1367.22 949.34L1367.62 949.41L1368.03 949.49L1368.43 949.56L1368.83 949.63L1369.24 949.70L1369.64 949.78L1370.04 949.85L1370.45 949.92L1370.85 949.99L1371.25 950.06L1371.66 950.13L1372.06 950.20L1372.46 950.27L1372.87 950.33L1373.27 950.40L1373.67 950.47L1374.08 950.53L1374.48 950.59L1374.88 950.66L1375.29 950.72L1375.69 950.78L1376.09 950.84L1376.50 950.89L1376.90 950.95L1377.30 951.01L1377.71 951.06L1378.11 951.11L1378.51 951.16L1378.92 951.21L1379.32 951.25L1379.73 951.30L1380.13 951.34L1380.53 951.38L1380.94 951.43L1381.34 951.47L1381.74 951.51L1382.15 951.55L1382.55 951.59L1382.95 951.63L1383.36 951.67L1383.76 951.70L1384.16 951.74L1384.57 951.78L1384.97 951.82L1385.37 951.85L1385.78 951.89L1386.18 951.92L1386.58 951.96L1386.99 951.99L1387.39 952.02L1387.79 952.05L1388.20 952.08L1388.60 952.11L1389.00 952.14L1389.41 952.17L1389.81 952.19L1390.21 952.22L1390.62 952.24L1391.02 952.26L1391.42 952.28L1391.83 952.30L1392.23 952.32L1392.63 952.34L1393.04 952.35L1393.44 952.37L1393.84 952.38L1394.25 952.40L1394.65 952.41L1395.05 952.42L1395.46 952.44L1395.86 952.45L1396.26 952.47L1396.67 952.48L1397.07 952.49L1397.47 952.50L1397.88 952.52L1398.28 952.53L1398.68 952.54L1399.09 952.55L1399.49 952.56L1399.89 952.57L1400.30 952.58L1400.70 952.59L1401.11 952.60L1401.51 952.60L1401.91 952.61L1402.32 952.62L1402.72 952.62L1403.12 952.63L1403.53 952.63L1403.93 952.63L1404.33 952.64L1404.74 952.64L1405.14 952.64" fill="none" stroke="#1479cf" stroke-width="1.5"/>
<text x="1379.00" y="511.00" font-size="11" fill="#222" text-anchor="start" textLength="40" lengthAdjust="spacingAndGlyphs">Sech&#178; fit</text>
<path d="M1360.2 507.5H1375.2" stroke="#ffc800" stroke-width="1.3"/>
<text x="1296.70" y="511.00" font-size="11" fill="#222" text-anchor="start" textLength="57.5" lengthAdjust="spacingAndGlyphs">Gaussian fit</text>
<path d="M1277.9 507.5H1292.9" stroke="#f02323" stroke-width="1.3"/>
<text x="1206.90" y="511.00" font-size="11" fill="#222" text-anchor="start" textLength="65" lengthAdjust="spacingAndGlyphs">Experimental</text>
<path d="M1188.1000000000001 507.5H1203.1000000000001" stroke="#1479cf" stroke-width="1.3"/>
</svg>
<svg style="left:0;top:0" width="1920" height="1004" viewBox="0 0 1920 1004" font-family="Liberation Sans">
<path d="M1509 938.5H1904" stroke="#c4c4c4" stroke-width="1" stroke-dasharray="2 2"/>
<path d="M1509 920.5H1904" stroke="#c4c4c4" stroke-width="1" stroke-dasharray="2 2"/>
<path d="M1509 902.5H1904" stroke="#c4c4c4" stroke-width="1" stroke-dasharray="2 2"/>
<path d="M1509 884.5H1904" stroke="#c4c4c4" stroke-width="1" stroke-dasharray="2 2"/>
<path d="M1509 866.5H1904" stroke="#c4c4c4" stroke-width="1" stroke-dasharray="2 2"/>
<path d="M1509 849.5H1904" stroke="#c4c4c4" stroke-width="1" stroke-dasharray="2 2"/>
<path d="M1509 831.5H1904" stroke="#c4c4c4" stroke-width="1" stroke-dasharray="2 2"/>
<path d="M1509 813.5H1904" stroke="#c4c4c4" stroke-width="1" stroke-dasharray="2 2"/>
<path d="M1509 795.5H1904" stroke="#c4c4c4" stroke-width="1" stroke-dasharray="2 2"/>
<path d="M1509 777.5H1904" stroke="#c4c4c4" stroke-width="1" stroke-dasharray="2 2"/>
<path d="M1509 760.5H1904" stroke="#c4c4c4" stroke-width="1" stroke-dasharray="2 2"/>
<path d="M1509 742.5H1904" stroke="#c4c4c4" stroke-width="1" stroke-dasharray="2 2"/>
<path d="M1509 724.5H1904" stroke="#c4c4c4" stroke-width="1" stroke-dasharray="2 2"/>
<path d="M1509 706.5H1904" stroke="#c4c4c4" stroke-width="1" stroke-dasharray="2 2"/>
<path d="M1509 688.5H1904" stroke="#c4c4c4" stroke-width="1" stroke-dasharray="2 2"/>
<path d="M1509 670.5H1904" stroke="#c4c4c4" stroke-width="1" stroke-dasharray="2 2"/>
<path d="M1509 653.5H1904" stroke="#c4c4c4" stroke-width="1" stroke-dasharray="2 2"/>
<path d="M1509 635.5H1904" stroke="#c4c4c4" stroke-width="1" stroke-dasharray="2 2"/>
<path d="M1509 617.5H1904" stroke="#c4c4c4" stroke-width="1" stroke-dasharray="2 2"/>
<path d="M1509 599.5H1904" stroke="#c4c4c4" stroke-width="1" stroke-dasharray="2 2"/>
<path d="M1509 581.5H1904" stroke="#c4c4c4" stroke-width="1" stroke-dasharray="2 2"/>
<path d="M1509 564.5H1904" stroke="#c4c4c4" stroke-width="1" stroke-dasharray="2 2"/>
<path d="M1509 546.5H1904" stroke="#c4c4c4" stroke-width="1" stroke-dasharray="2 2"/>
<path d="M1509 528.5H1904" stroke="#c4c4c4" stroke-width="1" stroke-dasharray="2 2"/>
<path d="M1509 510.5H1904" stroke="#c4c4c4" stroke-width="1" stroke-dasharray="2 2"/>
<rect x="1508.5" y="497.5" width="396" height="459" fill="none" stroke="#707070" stroke-width="1"/>
<path d="M1504.5 497V957" stroke="#c0c0c0" stroke-width="1"/>
<path d="M1502 956.5H1505" stroke="#c0c0c0" stroke-width="1"/>
<text x="1497.80" y="960.50" font-size="11" fill="#555555" text-anchor="end" >0.0</text>
<path d="M1502 938.5H1505" stroke="#c0c0c0" stroke-width="1"/>
<text x="1497.80" y="942.50" font-size="11" fill="#555555" text-anchor="end" >0.5</text>
<path d="M1502 920.5H1505" stroke="#c0c0c0" stroke-width="1"/>
<text x="1497.80" y="924.50" font-size="11" fill="#555555" text-anchor="end" >1.0</text>
<path d="M1502 902.5H1505" stroke="#c0c0c0" stroke-width="1"/>
<text x="1497.80" y="906.50" font-size="11" fill="#555555" text-anchor="end" >1.5</text>
<path d="M1502 884.5H1505" stroke="#c0c0c0" stroke-width="1"/>
<text x="1497.80" y="888.50" font-size="11" fill="#555555" text-anchor="end" >2.0</text>
<path d="M1502 866.5H1505" stroke="#c0c0c0" stroke-width="1"/>
<text x="1497.80" y="870.50" font-size="11" fill="#555555" text-anchor="end" >2.5</text>
<path d="M1502 849.5H1505" stroke="#c0c0c0" stroke-width="1"/>
<text x="1497.80" y="853.50" font-size="11" fill="#555555" text-anchor="end" >3.0</text>
<path d="M1502 831.5H1505" stroke="#c0c0c0" stroke-width="1"/>
<text x="1497.80" y="835.50" font-size="11" fill="#555555" text-anchor="end" >3.5</text>
<path d="M1502 813.5H1505" stroke="#c0c0c0" stroke-width="1"/>
<text x="1497.80" y="817.50" font-size="11" fill="#555555" text-anchor="end" >4.0</text>
<path d="M1502 795.5H1505" stroke="#c0c0c0" stroke-width="1"/>
<text x="1497.80" y="799.50" font-size="11" fill="#555555" text-anchor="end" >4.5</text>
<path d="M1502 777.5H1505" stroke="#c0c0c0" stroke-width="1"/>
<text x="1497.80" y="781.50" font-size="11" fill="#555555" text-anchor="end" >5.0</text>
<path d="M1502 760.5H1505" stroke="#c0c0c0" stroke-width="1"/>
<text x="1497.80" y="764.50" font-size="11" fill="#555555" text-anchor="end" >5.5</text>
<path d="M1502 742.5H1505" stroke="#c0c0c0" stroke-width="1"/>
<text x="1497.80" y="746.50" font-size="11" fill="#555555" text-anchor="end" >6.0</text>
<path d="M1502 724.5H1505" stroke="#c0c0c0" stroke-width="1"/>
<text x="1497.80" y="728.50" font-size="11" fill="#555555" text-anchor="end" >6.5</text>
<path d="M1502 706.5H1505" stroke="#c0c0c0" stroke-width="1"/>
<text x="1497.80" y="710.50" font-size="11" fill="#555555" text-anchor="end" >7.0</text>
<path d="M1502 688.5H1505" stroke="#c0c0c0" stroke-width="1"/>
<text x="1497.80" y="692.50" font-size="11" fill="#555555" text-anchor="end" >7.5</text>
<path d="M1502 670.5H1505" stroke="#c0c0c0" stroke-width="1"/>
<text x="1497.80" y="674.50" font-size="11" fill="#555555" text-anchor="end" >8.0</text>
<path d="M1502 653.5H1505" stroke="#c0c0c0" stroke-width="1"/>
<text x="1497.80" y="657.50" font-size="11" fill="#555555" text-anchor="end" >8.5</text>
<path d="M1502 635.5H1505" stroke="#c0c0c0" stroke-width="1"/>
<text x="1497.80" y="639.50" font-size="11" fill="#555555" text-anchor="end" >9.0</text>
<path d="M1502 617.5H1505" stroke="#c0c0c0" stroke-width="1"/>
<text x="1497.80" y="621.50" font-size="11" fill="#555555" text-anchor="end" >9.5</text>
<path d="M1502 599.5H1505" stroke="#c0c0c0" stroke-width="1"/>
<text x="1497.80" y="603.50" font-size="11" fill="#555555" text-anchor="end" >10.0</text>
<path d="M1502 581.5H1505" stroke="#c0c0c0" stroke-width="1"/>
<text x="1497.80" y="585.50" font-size="11" fill="#555555" text-anchor="end" >10.5</text>
<path d="M1502 564.5H1505" stroke="#c0c0c0" stroke-width="1"/>
<text x="1497.80" y="568.50" font-size="11" fill="#555555" text-anchor="end" >11.0</text>
<path d="M1502 546.5H1505" stroke="#c0c0c0" stroke-width="1"/>
<text x="1497.80" y="550.50" font-size="11" fill="#555555" text-anchor="end" >11.5</text>
<path d="M1502 528.5H1505" stroke="#c0c0c0" stroke-width="1"/>
<text x="1497.80" y="532.50" font-size="11" fill="#555555" text-anchor="end" >12.0</text>
<path d="M1502 510.5H1505" stroke="#c0c0c0" stroke-width="1"/>
<text x="1497.80" y="514.50" font-size="11" fill="#555555" text-anchor="end" >12.5</text>
<path d="M1508 960.5H1905" stroke="#c0c0c0" stroke-width="1"/>
<path d="M1537.5 960V963" stroke="#c0c0c0" stroke-width="1"/>
<text x="1537.50" y="974.00" font-size="11" fill="#555555" text-anchor="middle" >-1.5</text>
<path d="M1593.5 960V963" stroke="#c0c0c0" stroke-width="1"/>
<text x="1593.50" y="974.00" font-size="11" fill="#555555" text-anchor="middle" >-1.0</text>
<path d="M1649.5 960V963" stroke="#c0c0c0" stroke-width="1"/>
<text x="1649.50" y="974.00" font-size="11" fill="#555555" text-anchor="middle" >-0.5</text>
<path d="M1706.5 960V963" stroke="#c0c0c0" stroke-width="1"/>
<text x="1706.50" y="974.00" font-size="11" fill="#555555" text-anchor="middle" >0.0</text>
<path d="M1762.5 960V963" stroke="#c0c0c0" stroke-width="1"/>
<text x="1762.50" y="974.00" font-size="11" fill="#555555" text-anchor="middle" >0.5</text>
<path d="M1818.5 960V963" stroke="#c0c0c0" stroke-width="1"/>
<text x="1818.50" y="974.00" font-size="11" fill="#555555" text-anchor="middle" >1.0</text>
<path d="M1874.5 960V963" stroke="#c0c0c0" stroke-width="1"/>
<text x="1874.50" y="974.00" font-size="11" fill="#555555" text-anchor="middle" >1.5</text>
<text x="1706.50" y="991.00" font-size="12.5" fill="#444" text-anchor="middle" textLength="69.5" lengthAdjust="spacingAndGlyphs">Radius (mm)</text>
<text x="0" y="0" font-size="12.5" fill="#444" text-anchor="middle" textLength="101.5" lengthAdjust="spacingAndGlyphs" transform="translate(1469.2 726.3) rotate(-90)">Intensity (arb. unit)</text>
<path d="M1525.40 948.17L1525.90 947.98L1526.40 947.78L1526.90 947.58L1527.40 947.38L1527.90 947.18L1528.40 946.97L1528.90 946.75L1529.41 946.54L1529.91 946.31L1530.41 946.09L1530.91 945.86L1531.41 945.62L1531.91 945.38L1532.41 945.14L1532.92 944.89L1533.42 944.63L1533.92 944.37L1534.42 944.11L1534.92 943.84L1535.42 943.57L1535.92 943.29L1536.42 943.00L1536.93 942.71L1537.43 942.42L1537.93 942.12L1538.43 941.81L1538.93 941.50L1539.43 941.19L1539.93 940.86L1540.43 940.54L1540.94 940.20L1541.44 939.86L1541.94 939.51L1542.44 939.16L1542.94 938.80L1543.44 938.44L1543.94 938.07L1544.44 937.69L1544.95 937.31L1545.45 936.92L1545.95 936.52L1546.45 936.12L1546.95 935.70L1547.45 935.29L1547.95 934.86L1548.45 934.43L1548.96 933.99L1549.46 933.54L1549.96 933.09L1550.46 932.63L1550.96 932.16L1551.46 931.68L1551.96 931.20L1552.46 930.71L1552.97 930.21L1553.47 929.70L1553.97 929.18L1554.47 928.66L1554.97 928.13L1555.47 927.59L1555.97 927.04L1556.47 926.48L1556.98 925.92L1557.48 925.34L1557.98 924.76L1558.48 924.17L1558.98 923.56L1559.48 922.95L1559.98 922.33L1560.49 921.71L1560.99 921.07L1561.49 920.42L1561.99 919.76L1562.49 919.10L1562.99 918.42L1563.49 917.74L1563.99 917.04L1564.50 916.34L1565.00 915.62L1565.50 914.90L1566.00 914.16L1566.50 913.42L1567.00 912.66L1567.50 911.89L1568.00 911.12L1568.51 910.33L1569.01 909.53L1569.51 908.73L1570.01 907.91L1570.51 907.08L1571.01 906.24L1571.51 905.38L1572.01 904.52L1572.52 903.65L1573.02 902.76L1573.52 901.87L1574.02 900.96L1574.52 900.04L1575.02 899.11L1575.52 898.17L1576.02 897.21L1576.53 896.25L1577.03 895.27L1577.53 894.28L1578.03 893.28L1578.53 892.27L1579.03 891.24L1579.53 890.21L1580.03 889.16L1580.54 888.10L1581.04 887.02L1581.54 885.94L1582.04 884.84L1582.54 883.73L1583.04 882.61L1583.54 881.47L1584.05 880.33L1584.55 879.17L1585.05 877.99L1585.55 876.81L1586.05 875.61L1586.55 874.40L1587.05 873.18L1587.55 871.94L1588.06 870.70L1588.56 869.43L1589.06 868.16L1589.56 866.88L1590.06 865.58L1590.56 864.26L1591.06 862.94L1591.56 861.60L1592.07 860.25L1592.57 858.89L1593.07 857.51L1593.57 856.12L1594.07 854.72L1594.57 853.31L1595.07 851.88L1595.57 850.44L1596.08 848.99L1596.58 847.52L1597.08 846.04L1597.58 844.55L1598.08 843.05L1598.58 841.53L1599.08 840.00L1599.58 838.46L1600.09 836.91L1600.59 835.34L1601.09 833.76L1601.59 832.17L1602.09 830.56L1602.59 828.95L1603.09 827.32L1603.59 825.68L1604.10 824.02L1604.60 822.36L1605.10 820.68L1605.60 818.99L1606.10 817.29L1606.60 815.58L1607.10 813.85L1607.60 812.12L1608.11 810.37L1608.61 808.61L1609.11 806.84L1609.61 805.05L1610.11 803.26L1610.61 801.46L1611.11 799.64L1611.62 797.82L1612.12 795.98L1612.62 794.13L1613.12 792.27L1613.62 790.40L1614.12 788.53L1614.62 786.64L1615.12 784.74L1615.63 782.83L1616.13 780.91L1616.63 778.98L1617.13 777.05L1617.63 775.10L1618.13 773.14L1618.63 771.18L1619.13 769.20L1619.64 767.22L1620.14 765.23L1620.64 763.23L1621.14 761.23L1621.64 759.21L1622.14 757.19L1622.64 755.16L1623.14 753.12L1623.65 751.08L1624.15 749.03L1624.65 746.97L1625.15 744.90L1625.65 742.83L1626.15 740.76L1626.65 738.67L1627.15 736.59L1627.66 734.49L1628.16 732.39L1628.66 730.29L1629.16 728.18L1629.66 726.06L1630.16 723.95L1630.66 721.82L1631.16 719.70L1631.67 717.57L1632.17 715.44L1632.67 713.30L1633.17 711.16L1633.67 709.02L1634.17 706.88L1634.67 704.73L1635.18 702.58L1635.68 700.44L1636.18 698.29L1636.68 696.13L1637.18 693.98L1637.68 691.83L1638.18 689.68L1638.68 687.53L1639.19 685.37L1639.69 683.22L1640.19 681.07L1640.69 678.92L1641.19 676.78L1641.69 674.63L1642.19 672.49L1642.69 670.35L1643.20 668.21L1643.70 666.07L1644.20 663.94L1644.70 661.82L1645.20 659.69L1645.70 657.57L1646.20 655.46L1646.70 653.35L1647.21 651.24L1647.71 649.15L1648.21 647.05L1648.71 644.97L1649.21 642.88L1649.71 640.81L1650.21 638.74L1650.71 636.69L1651.22 634.63L1651.72 632.59L1652.22 630.56L1652.72 628.53L1653.22 626.51L1653.72 624.51L1654.22 622.51L1654.72 620.52L1655.23 618.54L1655.73 616.58L1656.23 614.62L1656.73 612.68L1657.23 610.75L1657.73 608.82L1658.23 606.92L1658.73 605.02L1659.24 603.14L1659.74 601.27L1660.24 599.41L1660.74 597.57L1661.24 595.74L1661.74 593.93L1662.24 592.13L1662.75 590.35L1663.25 588.58L1663.75 586.82L1664.25 585.09L1664.75 583.37L1665.25 581.66L1665.75 579.98L1666.25 578.31L1666.76 576.66L1667.26 575.02L1667.76 573.41L1668.26 571.81L1668.76 570.23L1669.26 568.67L1669.76 567.13L1670.26 565.61L1670.77 564.11L1671.27 562.63L1671.77 561.17L1672.27 559.73L1672.77 558.31L1673.27 556.91L1673.77 555.53L1674.27 554.18L1674.78 552.85L1675.28 551.53L1675.78 550.25L1676.28 548.98L1676.78 547.74L1677.28 546.52L1677.78 545.32L1678.28 544.15L1678.79 543.00L1679.29 541.87L1679.79 540.77L1680.29 539.70L1680.79 538.65L1681.29 537.62L1681.79 536.62L1682.29 535.64L1682.80 534.69L1683.30 533.76L1683.80 532.87L1684.30 531.99L1684.80 531.14L1685.30 530.32L1685.80 529.53L1686.30 528.76L1686.81 528.02L1687.31 527.30L1687.81 526.62L1688.31 525.96L1688.81 525.32L1689.31 524.72L1689.81 524.14L1690.32 523.59L1690.82 523.06L1691.32 522.57L1691.82 522.10L1692.32 521.66L1692.82 521.25L1693.32 520.87L1693.82 520.52L1694.33 520.19L1694.83 519.89L1695.33 519.62L1695.83 519.38L1696.33 519.17L1696.83 518.99L1697.33 518.83L1697.83 518.71L1698.34 518.61L1698.84 518.54L1699.34 518.50L1699.84 518.49L1700.34 518.51L1700.84 518.56L1701.34 518.63L1701.84 518.74L1702.35 518.87L1702.85 519.03L1703.35 519.22L1703.85 519.44L1704.35 519.69L1704.85 519.96L1705.35 520.27L1705.85 520.60L1706.36 520.96L1706.86 521.35L1707.36 521.77L1707.86 522.21L1708.36 522.68L1708.86 523.19L1709.36 523.72L1709.86 524.27L1710.37 524.86L1710.87 525.47L1711.37 526.11L1711.87 526.78L1712.37 527.47L1712.87 528.19L1713.37 528.94L1713.88 529.71L1714.38 530.51L1714.88 531.34L1715.38 532.20L1715.88 533.08L1716.38 533.98L1716.88 534.91L1717.38 535.87L1717.89 536.85L1718.39 537.86L1718.89 538.89L1719.39 539.95L1719.89 541.03L1720.39 542.14L1720.89 543.27L1721.39 544.42L1721.90 545.60L1722.40 546.80L1722.90 548.03L1723.40 549.28L1723.90 550.55L1724.40 551.84L1724.90 553.16L1725.40 554.50L1725.91 555.86L1726.41 557.24L1726.91 558.64L1727.41 560.07L1727.91 561.51L1728.41 562.98L1728.91 564.46L1729.41 565.97L1729.92 567.49L1730.42 569.04L1730.92 570.60L1731.42 572.19L1731.92 573.79L1732.42 575.41L1732.92 577.05L1733.42 578.70L1733.93 580.38L1734.43 582.07L1734.93 583.77L1735.43 585.50L1735.93 587.24L1736.43 588.99L1736.93 590.77L1737.43 592.55L1737.94 594.36L1738.44 596.17L1738.94 598.00L1739.44 599.85L1739.94 601.71L1740.44 603.58L1740.94 605.47L1741.45 607.37L1741.95 609.28L1742.45 611.20L1742.95 613.14L1743.45 615.08L1743.95 617.04L1744.45 619.01L1744.95 620.99L1745.46 622.98L1745.96 624.98L1746.46 626.99L1746.96 629.01L1747.46 631.04L1747.96 633.07L1748.46 635.12L1748.96 637.17L1749.47 639.23L1749.97 641.30L1750.47 643.38L1750.97 645.46L1751.47 647.55L1751.97 649.64L1752.47 651.74L1752.97 653.85L1753.48 655.96L1753.98 658.07L1754.48 660.19L1754.98 662.32L1755.48 664.45L1755.98 666.58L1756.48 668.72L1756.98 670.85L1757.49 673.00L1757.99 675.14L1758.49 677.28L1758.99 679.43L1759.49 681.58L1759.99 683.73L1760.49 685.88L1760.99 688.03L1761.50 690.19L1762.00 692.34L1762.50 694.49L1763.00 696.64L1763.50 698.79L1764.00 700.94L1764.50 703.09L1765.00 705.24L1765.51 707.38L1766.01 709.53L1766.51 711.67L1767.01 713.81L1767.51 715.94L1768.01 718.07L1768.51 720.20L1769.02 722.33L1769.52 724.45L1770.02 726.57L1770.52 728.68L1771.02 730.79L1771.52 732.89L1772.02 734.99L1772.52 737.08L1773.03 739.17L1773.53 741.25L1774.03 743.32L1774.53 745.39L1775.03 747.46L1775.53 749.51L1776.03 751.56L1776.53 753.61L1777.04 755.64L1777.54 757.67L1778.04 759.69L1778.54 761.70L1779.04 763.71L1779.54 765.70L1780.04 767.69L1780.54 769.67L1781.05 771.64L1781.55 773.61L1782.05 775.56L1782.55 777.50L1783.05 779.44L1783.55 781.37L1784.05 783.28L1784.55 785.19L1785.06 787.08L1785.56 788.97L1786.06 790.85L1786.56 792.71L1787.06 794.57L1787.56 796.41L1788.06 798.25L1788.56 800.07L1789.07 801.89L1789.57 803.69L1790.07 805.48L1790.57 807.26L1791.07 809.03L1791.57 810.78L1792.07 812.53L1792.58 814.26L1793.08 815.98L1793.58 817.69L1794.08 819.39L1794.58 821.08L1795.08 822.75L1795.58 824.42L1796.08 826.07L1796.59 827.70L1797.09 829.33L1797.59 830.94L1798.09 832.55L1798.59 834.13L1799.09 835.71L1799.59 837.28L1800.09 838.83L1800.60 840.37L1801.10 841.89L1801.60 843.41L1802.10 844.91L1802.60 846.39L1803.10 847.87L1803.60 849.33L1804.10 850.78L1804.61 852.22L1805.11 853.64L1805.61 855.05L1806.11 856.45L1806.61 857.84L1807.11 859.21L1807.61 860.57L1808.11 861.92L1808.62 863.25L1809.12 864.58L1809.62 865.88L1810.12 867.18L1810.62 868.46L1811.12 869.73L1811.62 870.99L1812.12 872.24L1812.63 873.47L1813.13 874.69L1813.63 875.90L1814.13 877.09L1814.63 878.27L1815.13 879.44L1815.63 880.60L1816.13 881.74L1816.64 882.87L1817.14 883.99L1817.64 885.10L1818.14 886.20L1818.64 887.28L1819.14 888.35L1819.64 889.41L1820.15 890.45L1820.65 891.49L1821.15 892.51L1821.65 893.52L1822.15 894.52L1822.65 895.50L1823.15 896.48L1823.65 897.44L1824.16 898.39L1824.66 899.33L1825.16 900.26L1825.66 901.17L1826.16 902.08L1826.66 902.97L1827.16 903.86L1827.66 904.73L1828.17 905.59L1828.67 906.44L1829.17 907.27L1829.67 908.10L1830.17 908.92L1830.67 909.72L1831.17 910.52L1831.67 911.30L1832.18 912.08L1832.68 912.84L1833.18 913.59L1833.68 914.34L1834.18 915.07L1834.68 915.79L1835.18 916.50L1835.68 917.21L1836.19 917.90L1836.69 918.58L1837.19 919.26L1837.69 919.92L1838.19 920.58L1838.69 921.22L1839.19 921.86L1839.69 922.48L1840.20 923.10L1840.70 923.71L1841.20 924.31L1841.70 924.90L1842.20 925.48L1842.70 926.05L1843.20 926.61L1843.70 927.17L1844.21 927.72L1844.71 928.26L1845.21 928.79L1845.71 929.31L1846.21 929.82L1846.71 930.33L1847.21 930.82L1847.72 931.32L1848.22 931.80L1848.72 932.27L1849.22 932.74L1849.72 933.20L1850.22 933.65L1850.72 934.10L1851.22 934.53L1851.73 934.96L1852.23 935.39L1852.73 935.80L1853.23 936.21L1853.73 936.61L1854.23 937.01L1854.73 937.40L1855.23 937.78L1855.74 938.16L1856.24 938.53L1856.74 938.89L1857.24 939.25L1857.74 939.60L1858.24 939.94L1858.74 940.28L1859.24 940.61L1859.75 940.94L1860.25 941.26L1860.75 941.58L1861.25 941.89L1861.75 942.19L1862.25 942.49L1862.75 942.78L1863.25 943.07L1863.76 943.35L1864.26 943.63L1864.76 943.90L1865.26 944.17L1865.76 944.43L1866.26 944.69L1866.76 944.95L1867.26 945.19L1867.77 945.44L1868.27 945.68L1868.77 945.91L1869.27 946.14L1869.77 946.37L1870.27 946.59L1870.77 946.80L1871.28 947.02L1871.78 947.23L1872.28 947.43L1872.78 947.63L1873.28 947.83L1873.78 948.02L1874.28 948.21L1874.78 948.40L1875.29 948.58L1875.79 948.76L1876.29 948.93L1876.79 949.10L1877.29 949.27L1877.79 949.43L1878.29 949.59L1878.79 949.75L1879.30 949.91L1879.80 950.06L1880.30 950.20L1880.80 950.35L1881.30 950.49L1881.80 950.63L1882.30 950.77L1882.80 950.90L1883.31 951.03L1883.81 951.16L1884.31 951.28L1884.81 951.41L1885.31 951.53L1885.81 951.64" fill="none" stroke="#f02323" stroke-width="1.5"/>
<path d="M1525.40 927.91L1525.90 936.40L1526.40 930.60L1526.90 932.25L1527.40 931.82L1527.90 931.17L1528.40 934.30L1528.90 930.76L1529.41 931.70L1529.91 923.74L1530.41 929.21L1530.91 930.03L1531.41 929.65L1531.91 930.09L1532.41 930.53L1532.92 929.06L1533.42 927.21L1533.92 928.23L1534.42 925.81L1534.92 927.59L1535.42 926.90L1535.92 923.90L1536.42 925.38L1536.93 926.92L1537.43 926.04L1537.93 924.45L1538.43 921.69L1538.93 925.20L1539.43 924.80L1539.93 922.27L1540.43 925.16L1540.94 923.75L1541.44 921.34L1541.94 921.48L1542.44 921.93L1542.94 920.57L1543.44 926.12L1543.94 919.25L1544.44 922.22L1544.95 923.04L1545.45 919.43L1545.95 918.37L1546.45 919.92L1546.95 920.61L1547.45 918.43L1547.95 918.21L1548.45 915.46L1548.96 916.19L1549.46 916.73L1549.96 914.89L1550.46 916.66L1550.96 917.45L1551.46 914.66L1551.96 914.29L1552.46 915.19L1552.97 915.71L1553.47 913.72L1553.97 917.61L1554.47 912.21L1554.97 912.12L1555.47 915.03L1555.97 911.96L1556.47 913.12L1556.98 910.03L1557.48 913.88L1557.98 911.71L1558.48 908.77L1558.98 907.62L1559.48 912.16L1559.98 909.16L1560.49 907.41L1560.99 908.31L1561.49 904.50L1561.99 908.10L1562.49 905.26L1562.99 906.76L1563.49 902.58L1563.99 904.08L1564.50 903.99L1565.00 905.32L1565.50 899.76L1566.00 900.46L1566.50 899.80L1567.00 898.59L1567.50 899.03L1568.00 899.74L1568.51 899.26L1569.01 898.54L1569.51 894.76L1570.01 897.98L1570.51 896.02L1571.01 894.88L1571.51 893.35L1572.01 892.10L1572.52 893.80L1573.02 893.66L1573.52 890.50L1574.02 888.04L1574.52 887.84L1575.02 887.74L1575.52 887.61L1576.02 885.95L1576.53 885.81L1577.03 883.56L1577.53 884.81L1578.03 882.73L1578.53 882.19L1579.03 880.47L1579.53 880.01L1580.03 876.14L1580.54 876.62L1581.04 875.73L1581.54 879.32L1582.04 876.25L1582.54 875.66L1583.04 873.29L1583.54 875.84L1584.05 870.59L1584.55 869.75L1585.05 871.67L1585.55 870.26L1586.05 869.01L1586.55 866.94L1587.05 865.16L1587.55 862.41L1588.06 864.03L1588.56 861.79L1589.06 861.42L1589.56 858.41L1590.06 858.49L1590.56 856.61L1591.06 858.30L1591.56 856.10L1592.07 855.61L1592.57 851.74L1593.07 851.48L1593.57 851.33L1594.07 850.22L1594.57 847.87L1595.07 847.90L1595.57 846.83L1596.08 843.93L1596.58 840.40L1597.08 842.02L1597.58 840.98L1598.08 840.25L1598.58 839.01L1599.08 835.59L1599.58 833.82L1600.09 833.27L1600.59 831.47L1601.09 830.22L1601.59 828.71L1602.09 828.94L1602.59 826.31L1603.09 824.19L1603.59 823.57L1604.10 821.69L1604.60 820.47L1605.10 818.39L1605.60 815.61L1606.10 815.26L1606.60 813.38L1607.10 810.78L1607.60 809.31L1608.11 806.60L1608.61 808.70L1609.11 804.07L1609.61 803.71L1610.11 801.39L1610.61 798.96L1611.11 796.98L1611.62 795.28L1612.12 794.41L1612.62 791.19L1613.12 791.29L1613.62 789.36L1614.12 786.62L1614.62 786.15L1615.12 781.62L1615.63 780.92L1616.13 777.92L1616.63 778.26L1617.13 776.75L1617.63 774.32L1618.13 771.87L1618.63 771.29L1619.13 768.42L1619.64 766.90L1620.14 763.35L1620.64 763.70L1621.14 760.05L1621.64 759.79L1622.14 758.15L1622.64 755.94L1623.14 754.45L1623.65 751.14L1624.15 748.27L1624.65 747.14L1625.15 744.68L1625.65 741.67L1626.15 741.02L1626.65 739.08L1627.15 737.52L1627.66 736.82L1628.16 732.42L1628.66 732.89L1629.16 728.44L1629.66 727.05L1630.16 723.86L1630.66 722.99L1631.16 721.68L1631.67 718.43L1632.17 717.27L1632.67 714.81L1633.17 712.51L1633.67 710.60L1634.17 708.57L1634.67 707.12L1635.18 704.39L1635.68 704.24L1636.18 700.16L1636.68 699.10L1637.18 694.69L1637.68 692.44L1638.18 693.55L1638.68 689.36L1639.19 687.52L1639.69 686.34L1640.19 682.66L1640.69 681.55L1641.19 680.75L1641.69 677.15L1642.19 674.93L1642.69 672.58L1643.20 671.82L1643.70 667.88L1644.20 665.67L1644.70 665.46L1645.20 662.88L1645.70 660.22L1646.20 658.63L1646.70 654.24L1647.21 653.70L1647.71 652.85L1648.21 650.57L1648.71 647.78L1649.21 643.38L1649.71 643.80L1650.21 641.46L1650.71 639.03L1651.22 637.56L1651.72 633.22L1652.22 634.02L1652.72 630.74L1653.22 629.33L1653.72 626.89L1654.22 626.71L1654.72 621.81L1655.23 621.74L1655.73 619.64L1656.23 618.67L1656.73 616.55L1657.23 613.34L1657.73 611.02L1658.23 609.37L1658.73 607.04L1659.24 605.67L1659.74 604.51L1660.24 601.86L1660.74 600.28L1661.24 599.17L1661.74 596.54L1662.24 594.21L1662.75 593.49L1663.25 592.33L1663.75 589.52L1664.25 586.62L1664.75 587.02L1665.25 585.21L1665.75 583.58L1666.25 580.57L1666.76 581.98L1667.26 578.16L1667.76 575.73L1668.26 576.14L1668.76 572.27L1669.26 571.67L1669.76 571.22L1670.26 568.96L1670.77 569.19L1671.27 566.75L1671.77 562.91L1672.27 564.18L1672.77 560.03L1673.27 560.55L1673.77 558.10L1674.27 557.69L1674.78 558.64L1675.28 555.65L1675.78 553.60L1676.28 553.66L1676.78 552.60L1677.28 549.66L1677.78 549.46L1678.28 549.32L1678.79 547.15L1679.29 544.46L1679.79 544.68L1680.29 542.18L1680.79 540.51L1681.29 540.96L1681.79 541.09L1682.29 540.26L1682.80 538.02L1683.30 536.16L1683.80 535.85L1684.30 534.67L1684.80 534.78L1685.30 533.19L1685.80 533.14L1686.30 532.19L1686.81 532.39L1687.31 531.92L1687.81 530.11L1688.31 530.05L1688.81 529.23L1689.31 526.97L1689.81 527.13L1690.32 523.53L1690.82 524.96L1691.32 525.99L1691.82 524.08L1692.32 524.03L1692.82 524.62L1693.32 522.42L1693.82 523.90L1694.33 525.82L1694.83 521.64L1695.33 522.75L1695.83 520.37L1696.33 522.26L1696.83 522.57L1697.33 519.65L1697.83 522.11L1698.34 520.70L1698.84 519.36L1699.34 520.61L1699.84 520.76L1700.34 520.56L1700.84 519.84L1701.34 521.53L1701.84 520.18L1702.35 520.32L1702.85 518.70L1703.35 521.52L1703.85 522.28L1704.35 520.85L1704.85 522.23L1705.35 521.82L1705.85 522.28L1706.36 521.58L1706.86 523.77L1707.36 523.59L1707.86 526.47L1708.36 525.25L1708.86 523.31L1709.36 526.02L1709.86 526.57L1710.37 527.64L1710.87 526.43L1711.37 527.45L1711.87 529.45L1712.37 528.26L1712.87 529.36L1713.37 529.59L1713.88 531.73L1714.38 530.13L1714.88 532.25L1715.38 533.60L1715.88 534.85L1716.38 535.46L1716.88 535.26L1717.38 537.31L1717.89 536.92L1718.39 538.40L1718.89 538.64L1719.39 540.20L1719.89 542.12L1720.39 545.05L1720.89 543.94L1721.39 544.58L1721.90 546.36L1722.40 547.14L1722.90 549.36L1723.40 550.49L1723.90 552.29L1724.40 551.26L1724.90 553.75L1725.40 555.71L1725.91 557.88L1726.41 558.05L1726.91 557.84L1727.41 560.21L1727.91 562.81L1728.41 562.10L1728.91 563.56L1729.41 565.49L1729.92 567.18L1730.42 568.33L1730.92 570.48L1731.42 571.81L1731.92 574.94L1732.42 574.26L1732.92 577.14L1733.42 576.98L1733.93 582.69L1734.43 581.61L1734.93 583.02L1735.43 586.04L1735.93 586.97L1736.43 588.40L1736.93 590.32L1737.43 593.20L1737.94 594.59L1738.44 595.22L1738.94 596.78L1739.44 599.78L1739.94 601.64L1740.44 603.37L1740.94 604.40L1741.45 608.37L1741.95 610.53L1742.45 610.99L1742.95 614.13L1743.45 615.54L1743.95 616.81L1744.45 618.36L1744.95 621.88L1745.46 621.98L1745.96 626.53L1746.46 626.21L1746.96 630.32L1747.46 632.03L1747.96 632.14L1748.46 635.21L1748.96 637.64L1749.47 639.33L1749.97 640.47L1750.47 643.05L1750.97 645.09L1751.47 646.08L1751.97 649.92L1752.47 651.76L1752.97 653.90L1753.48 654.31L1753.98 656.58L1754.48 658.39L1754.98 661.82L1755.48 664.05L1755.98 665.16L1756.48 668.53L1756.98 669.43L1757.49 671.66L1757.99 675.21L1758.49 676.72L1758.99 678.89L1759.49 679.18L1759.99 680.46L1760.49 685.28L1760.99 687.30L1761.50 691.73L1762.00 691.38L1762.50 693.73L1763.00 696.94L1763.50 697.22L1764.00 701.70L1764.50 702.49L1765.00 704.26L1765.51 707.78L1766.01 707.81L1766.51 709.74L1767.01 714.30L1767.51 716.44L1768.01 716.55L1768.51 719.30L1769.02 722.59L1769.52 723.78L1770.02 725.70L1770.52 727.83L1771.02 728.96L1771.52 731.49L1772.02 732.20L1772.52 734.67L1773.03 737.44L1773.53 739.11L1774.03 740.93L1774.53 743.60L1775.03 747.58L1775.53 747.54L1776.03 750.37L1776.53 750.85L1777.04 754.40L1777.54 755.99L1778.04 758.19L1778.54 758.85L1779.04 762.34L1779.54 764.78L1780.04 766.18L1780.54 768.90L1781.05 770.26L1781.55 772.38L1782.05 774.05L1782.55 774.33L1783.05 778.59L1783.55 780.06L1784.05 782.21L1784.55 783.23L1785.06 786.97L1785.56 788.36L1786.06 789.58L1786.56 790.85L1787.06 793.29L1787.56 795.58L1788.06 797.77L1788.56 798.21L1789.07 799.09L1789.57 802.00L1790.07 803.92L1790.57 805.43L1791.07 808.58L1791.57 809.70L1792.07 811.39L1792.58 812.55L1793.08 814.59L1793.58 817.48L1794.08 816.83L1794.58 817.94L1795.08 821.56L1795.58 822.55L1796.08 824.32L1796.59 825.43L1797.09 829.31L1797.59 827.83L1798.09 831.49L1798.59 831.34L1799.09 834.09L1799.59 836.11L1800.09 837.40L1800.60 837.89L1801.10 841.16L1801.60 842.18L1802.10 843.77L1802.60 846.47L1803.10 844.93L1803.60 847.09L1804.10 849.13L1804.61 849.37L1805.11 852.89L1805.61 853.41L1806.11 852.99L1806.61 855.10L1807.11 859.66L1807.61 862.12L1808.11 861.15L1808.62 860.34L1809.12 863.20L1809.62 864.22L1810.12 864.65L1810.62 867.44L1811.12 867.55L1811.62 868.17L1812.12 869.72L1812.63 870.99L1813.13 873.23L1813.63 873.22L1814.13 875.38L1814.63 874.66L1815.13 874.40L1815.63 879.11L1816.13 881.79L1816.64 880.96L1817.14 881.15L1817.64 881.46L1818.14 882.47L1818.64 885.59L1819.14 886.62L1819.64 885.29L1820.15 888.96L1820.65 887.45L1821.15 889.92L1821.65 889.72L1822.15 890.73L1822.65 891.56L1823.15 892.42L1823.65 895.45L1824.16 894.81L1824.66 896.02L1825.16 896.53L1825.66 896.26L1826.16 898.90L1826.66 900.26L1827.16 901.09L1827.66 901.38L1828.17 900.86L1828.67 903.56L1829.17 901.87L1829.67 903.68L1830.17 905.03L1830.67 907.10L1831.17 905.76L1831.67 905.82L1832.18 909.55L1832.68 906.36L1833.18 906.32L1833.68 908.55L1834.18 908.87L1834.68 906.86L1835.18 908.88L1835.68 912.13L1836.19 911.43L1836.69 912.05L1837.19 912.47L1837.69 915.83L1838.19 912.06L1838.69 914.32L1839.19 913.62L1839.69 914.39L1840.20 913.38L1840.70 915.33L1841.20 916.36L1841.70 914.87L1842.20 914.00L1842.70 916.73L1843.20 914.70L1843.70 916.58L1844.21 918.03L1844.71 915.45L1845.21 919.11L1845.71 916.84L1846.21 919.34L1846.71 918.32L1847.21 921.10L1847.72 920.89L1848.22 918.49L1848.72 920.14L1849.22 920.74L1849.72 921.83L1850.22 920.91L1850.72 924.03L1851.22 924.01L1851.73 922.96L1852.23 924.35L1852.73 924.53L1853.23 923.95L1853.73 924.41L1854.23 924.90L1854.73 922.37L1855.23 923.70L1855.74 923.68L1856.24 925.93L1856.74 926.97L1857.24 928.74L1857.74 927.30L1858.24 930.29L1858.74 928.18L1859.24 926.28L1859.75 925.12L1860.25 926.34L1860.75 929.41L1861.25 927.41L1861.75 929.61L1862.25 927.15L1862.75 928.77L1863.25 927.31L1863.76 924.62L1864.26 927.40L1864.76 925.18L1865.26 928.79L1865.76 929.71L1866.26 927.04L1866.76 926.47L1867.26 930.33L1867.77 929.36L1868.27 931.98L1868.77 930.00L1869.27 928.25L1869.77 929.98L1870.27 930.89L1870.77 932.40L1871.28 929.44L1871.78 928.78L1872.28 929.19L1872.78 929.84L1873.28 932.55L1873.78 927.34L1874.28 930.56L1874.78 930.76L1875.29 929.27L1875.79 934.42L1876.29 930.77L1876.79 930.94L1877.29 930.07L1877.79 928.37L1878.29 929.96L1878.79 934.13L1879.30 931.48L1879.80 930.53L1880.30 930.66L1880.80 933.28L1881.30 934.00L1881.80 929.99L1882.30 930.38L1882.80 931.06L1883.31 934.22L1883.81 927.77L1884.31 936.45L1884.81 931.75L1885.31 927.18L1885.81 931.38" fill="none" stroke="#1479cf" stroke-width="1.4"/>
<text x="1842.50" y="511.00" font-size="11" fill="#222" text-anchor="start" textLength="57.5" lengthAdjust="spacingAndGlyphs">Gaussian fit</text>
<path d="M1823.7 507.5H1838.7" stroke="#f02323" stroke-width="1.3"/>
<text x="1752.70" y="511.00" font-size="11" fill="#222" text-anchor="start" textLength="65" lengthAdjust="spacingAndGlyphs">Experimental</text>
<path d="M1733.9 507.5H1748.9" stroke="#1479cf" stroke-width="1.3"/>
</svg>
</body></html>
